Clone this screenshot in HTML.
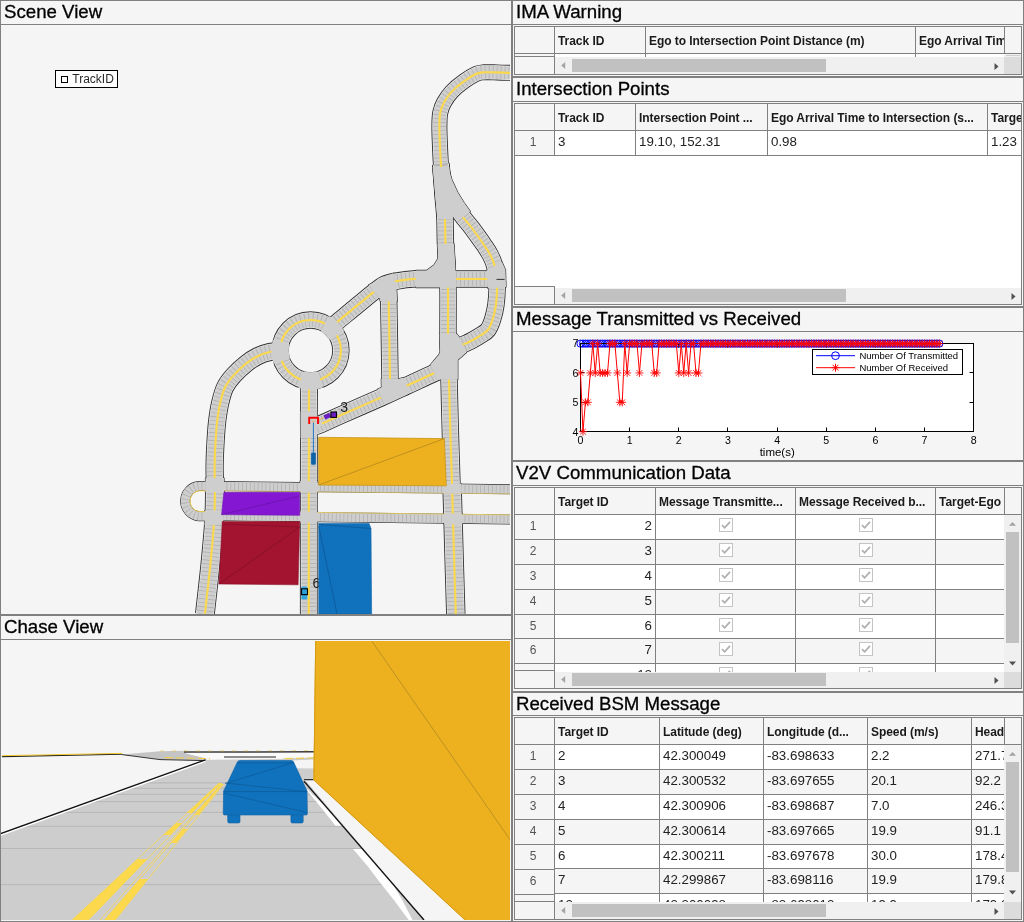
<!DOCTYPE html>
<html><head><meta charset="utf-8"><title>V2V Scene</title>
<style>
html,body{margin:0;padding:0;}
body{width:1024px;height:922px;position:relative;overflow:hidden;background:#f5f5f5;font-family:"Liberation Sans",sans-serif;color:#000;}
.abs{position:absolute;}
.ln{position:absolute;background:#808080;}
.ttl{position:absolute;-webkit-text-stroke:0.3px #000;font-size:18.67px;line-height:22px;white-space:nowrap;color:#000;}
.tbl{position:absolute;overflow:hidden;background:#fff;}
.hd{position:absolute;font-weight:bold;font-size:12px;letter-spacing:-0.05px;white-space:nowrap;overflow:hidden;color:#1a1a1a;}
.rn{position:absolute;font-size:12px;color:#555;text-align:center;white-space:nowrap;}
.tx{position:absolute;font-size:13.33px;white-space:nowrap;overflow:hidden;color:#222;}
.bg{position:absolute;}
svg{position:absolute;overflow:hidden;}
#root{position:absolute;left:0;top:0;width:1024px;height:922px;will-change:transform;}
</style></head><body><div id="root">
<div class="ln" style="left:0px;top:0px;width:1024px;height:1px;background:#808080"></div>
<div class="ln" style="left:0px;top:0px;width:1px;height:922px;background:#808080"></div>
<div class="ln" style="left:511px;top:0px;width:2px;height:922px;background:#808080"></div>
<div class="ln" style="left:1023px;top:0px;width:1px;height:922px;background:#808080"></div>
<div class="ln" style="left:0px;top:921px;width:1024px;height:1px;background:#808080"></div>
<div class="ln" style="left:0px;top:614px;width:512px;height:2px;background:#808080"></div>
<div class="ln" style="left:512px;top:76px;width:512px;height:2px;background:#808080"></div>
<div class="ln" style="left:512px;top:306px;width:512px;height:2px;background:#808080"></div>
<div class="ln" style="left:512px;top:460px;width:512px;height:2px;background:#808080"></div>
<div class="ln" style="left:512px;top:691px;width:512px;height:2px;background:#808080"></div>
<div class="ln" style="left:0px;top:24px;width:512px;height:1px;background:#808080"></div>
<div class="ln" style="left:0px;top:639px;width:512px;height:1px;background:#808080"></div>
<div class="ln" style="left:512px;top:24px;width:512px;height:1px;background:#808080"></div>
<div class="ln" style="left:512px;top:101px;width:512px;height:1px;background:#808080"></div>
<div class="ln" style="left:512px;top:331px;width:512px;height:1px;background:#808080"></div>
<div class="ln" style="left:512px;top:485px;width:512px;height:1px;background:#808080"></div>
<div class="ln" style="left:512px;top:715px;width:512px;height:1px;background:#808080"></div>
<div class="ttl" style="left:4px;top:1px">Scene View</div>
<div class="ttl" style="left:4px;top:615.5px">Chase View</div>
<div class="ttl" style="left:516px;top:1px">IMA Warning</div>
<div class="ttl" style="left:516px;top:77.5px">Intersection Points</div>
<div class="ttl" style="left:516px;top:307.5px">Message Transmitted vs Received</div>
<div class="ttl" style="left:516px;top:461.5px">V2V Communication Data</div>
<div class="ttl" style="left:516px;top:692.5px">Received BSM Message</div>
<div class="bg" style="left:514px;top:26px;width:508px;height:49px;background:#ffffff"></div>
<div class="bg" style="left:515px;top:27px;width:506px;height:26px;background:#f5f5f5"></div>
<div class="bg" style="left:555px;top:54px;width:449px;height:3px;background:#ffffff"></div>
<div class="bg" style="left:515px;top:54px;width:39px;height:2px;background:#f5f5f5"></div>
<div class="ln" style="left:645px;top:27px;width:1px;height:30px;background:#808080"></div>
<div class="ln" style="left:915px;top:27px;width:1px;height:30px;background:#808080"></div>
<div class="ln" style="left:554px;top:27px;width:1px;height:30px;background:#808080"></div>
<div class="ln" style="left:554px;top:56px;width:1px;height:18px;background:#808080"></div>
<div class="ln" style="left:515px;top:53px;width:506px;height:1px;background:#808080"></div>
<div class="ln" style="left:515px;top:56px;width:39px;height:1px;background:#808080"></div>
<div class="bg" style="left:515px;top:57px;width:39px;height:17px;background:#f5f5f5"></div>
<div class="bg" style="left:555px;top:57px;width:449px;height:17px;background:#f0f0f0"></div>
<div class="bg" style="left:572px;top:59px;width:254px;height:13px;background:#c1c1c1"></div>
<svg style="left:561px;top:61px" width="5" height="10"><path d="M4.2 0.9 L0.2 4.4 L4.2 7.9 Z" fill="#a3a3a3"/></svg>
<svg style="left:994px;top:61px" width="5" height="10"><path d="M0.5 1.9 L4.5 5.4 L0.5 8.9 Z" fill="#505050"/></svg>
<div class="ln" style="left:1004px;top:27px;width:1px;height:27px;background:#808080"></div>
<div class="bg" style="left:1004px;top:54px;width:17px;height:3px;background:#f0f0f0"></div>
<div class="bg" style="left:1004px;top:57px;width:17px;height:17px;background:#dcdcdc"></div>
<div class="ln" style="left:514px;top:26px;width:508px;height:1px;background:#808080"></div>
<div class="ln" style="left:514px;top:74px;width:508px;height:1px;background:#808080"></div>
<div class="ln" style="left:514px;top:26px;width:1px;height:49px;background:#808080"></div>
<div class="ln" style="left:1021px;top:26px;width:1px;height:49px;background:#808080"></div>
<div class="hd" style="left:558px;top:33px;width:87px;height:16px;line-height:16px">Track ID</div>
<div class="hd" style="left:649px;top:33px;width:266px;height:16px;line-height:16px">Ego to Intersection Point Distance (m)</div>
<div class="hd" style="left:919px;top:33px;width:85px;height:16px;line-height:16px">Ego Arrival Tim</div>
<div class="ln" style="left:1006px;top:55px;width:14px;height:1px;background:#cfcfcf"></div>
<div class="bg" style="left:514px;top:103px;width:508px;height:202px;background:#ffffff"></div>
<div class="bg" style="left:515px;top:104px;width:506px;height:26px;background:#f5f5f5"></div>
<div class="bg" style="left:555px;top:131px;width:466px;height:24px;background:#ffffff"></div>
<div class="bg" style="left:515px;top:131px;width:39px;height:25px;background:#f5f5f5"></div>
<div class="ln" style="left:555px;top:155px;width:466px;height:1px;background:#808080"></div>
<div class="ln" style="left:515px;top:155px;width:40px;height:1px;background:#808080"></div>
<div class="ln" style="left:635px;top:104px;width:1px;height:52px;background:#808080"></div>
<div class="ln" style="left:767px;top:104px;width:1px;height:52px;background:#808080"></div>
<div class="ln" style="left:987px;top:104px;width:1px;height:52px;background:#808080"></div>
<div class="ln" style="left:554px;top:104px;width:1px;height:52px;background:#808080"></div>
<div class="ln" style="left:554px;top:286px;width:1px;height:18px;background:#808080"></div>
<div class="ln" style="left:515px;top:130px;width:506px;height:1px;background:#808080"></div>
<div class="ln" style="left:515px;top:286px;width:39px;height:1px;background:#808080"></div>
<div class="bg" style="left:515px;top:287px;width:39px;height:17px;background:#f5f5f5"></div>
<div class="bg" style="left:555px;top:288px;width:466px;height:16px;background:#f0f0f0"></div>
<div class="bg" style="left:572px;top:289px;width:274px;height:13px;background:#c1c1c1"></div>
<svg style="left:561px;top:291px" width="5" height="10"><path d="M4.2 0.9 L0.2 4.4 L4.2 7.9 Z" fill="#a3a3a3"/></svg>
<svg style="left:1011px;top:291px" width="5" height="10"><path d="M0.5 1.9 L4.5 5.4 L0.5 8.9 Z" fill="#505050"/></svg>
<div class="ln" style="left:514px;top:103px;width:508px;height:1px;background:#808080"></div>
<div class="ln" style="left:514px;top:304px;width:508px;height:1px;background:#808080"></div>
<div class="ln" style="left:514px;top:103px;width:1px;height:202px;background:#808080"></div>
<div class="ln" style="left:1021px;top:103px;width:1px;height:202px;background:#808080"></div>
<div class="hd" style="left:558px;top:110px;width:77px;height:16px;line-height:16px">Track ID</div>
<div class="hd" style="left:639px;top:110px;width:128px;height:16px;line-height:16px">Intersection Point ...</div>
<div class="hd" style="left:771px;top:110px;width:216px;height:16px;line-height:16px">Ego Arrival Time to Intersection (s...</div>
<div class="hd" style="left:991px;top:110px;width:30px;height:16px;line-height:16px">Targe</div>
<div class="rn" style="left:515px;top:134px;width:36px;line-height:16px">1</div>
<div class="tx" style="left:555px;top:131px;width:77px;padding-left:3px;text-align:left;line-height:22px;height:24px;overflow:hidden;">3</div>
<div class="tx" style="left:636px;top:131px;width:128px;padding-left:3px;text-align:left;line-height:22px;height:24px;overflow:hidden;">19.10, 152.31</div>
<div class="tx" style="left:768px;top:131px;width:216px;padding-left:3px;text-align:left;line-height:22px;height:24px;overflow:hidden;">0.98</div>
<div class="tx" style="left:988px;top:131px;width:30px;padding-left:3px;text-align:left;line-height:22px;height:24px;overflow:hidden;">1.23</div>
<div class="bg" style="left:514px;top:487px;width:508px;height:202px;background:#ffffff"></div>
<div class="bg" style="left:515px;top:488px;width:506px;height:26px;background:#f5f5f5"></div>
<div class="bg" style="left:555px;top:515px;width:449px;height:24px;background:#ffffff"></div>
<div class="bg" style="left:555px;top:540px;width:449px;height:24px;background:#f5f5f5"></div>
<div class="bg" style="left:555px;top:565px;width:449px;height:24px;background:#ffffff"></div>
<div class="bg" style="left:555px;top:590px;width:449px;height:24px;background:#f5f5f5"></div>
<div class="bg" style="left:555px;top:615px;width:449px;height:23px;background:#ffffff"></div>
<div class="bg" style="left:555px;top:639px;width:449px;height:24px;background:#f5f5f5"></div>
<div class="bg" style="left:555px;top:664px;width:449px;height:8px;background:#ffffff"></div>
<div class="bg" style="left:515px;top:515px;width:39px;height:156px;background:#f5f5f5"></div>
<div class="ln" style="left:555px;top:539px;width:449px;height:1px;background:#808080"></div>
<div class="ln" style="left:515px;top:539px;width:40px;height:1px;background:#808080"></div>
<div class="ln" style="left:555px;top:564px;width:449px;height:1px;background:#808080"></div>
<div class="ln" style="left:515px;top:564px;width:40px;height:1px;background:#808080"></div>
<div class="ln" style="left:555px;top:589px;width:449px;height:1px;background:#808080"></div>
<div class="ln" style="left:515px;top:589px;width:40px;height:1px;background:#808080"></div>
<div class="ln" style="left:555px;top:614px;width:449px;height:1px;background:#808080"></div>
<div class="ln" style="left:515px;top:614px;width:40px;height:1px;background:#808080"></div>
<div class="ln" style="left:555px;top:638px;width:449px;height:1px;background:#808080"></div>
<div class="ln" style="left:515px;top:638px;width:40px;height:1px;background:#808080"></div>
<div class="ln" style="left:555px;top:663px;width:449px;height:1px;background:#808080"></div>
<div class="ln" style="left:515px;top:663px;width:40px;height:1px;background:#808080"></div>
<div class="ln" style="left:655px;top:488px;width:1px;height:184px;background:#808080"></div>
<div class="ln" style="left:795px;top:488px;width:1px;height:184px;background:#808080"></div>
<div class="ln" style="left:935px;top:488px;width:1px;height:184px;background:#808080"></div>
<div class="ln" style="left:554px;top:488px;width:1px;height:184px;background:#808080"></div>
<div class="ln" style="left:554px;top:670px;width:1px;height:18px;background:#808080"></div>
<div class="ln" style="left:515px;top:514px;width:506px;height:1px;background:#808080"></div>
<div class="ln" style="left:515px;top:670px;width:39px;height:1px;background:#808080"></div>
<div class="bg" style="left:515px;top:671px;width:39px;height:17px;background:#f5f5f5"></div>
<div class="bg" style="left:555px;top:672px;width:449px;height:16px;background:#f0f0f0"></div>
<div class="bg" style="left:572px;top:673px;width:254px;height:13px;background:#c1c1c1"></div>
<svg style="left:561px;top:675px" width="5" height="10"><path d="M4.2 0.9 L0.2 4.4 L4.2 7.9 Z" fill="#a3a3a3"/></svg>
<svg style="left:994px;top:675px" width="5" height="10"><path d="M0.5 1.9 L4.5 5.4 L0.5 8.9 Z" fill="#505050"/></svg>
<div class="ln" style="left:1004px;top:488px;width:1px;height:27px;background:#808080"></div>
<div class="bg" style="left:1004px;top:515px;width:17px;height:157px;background:#f0f0f0"></div>
<div class="bg" style="left:1004px;top:672px;width:17px;height:16px;background:#dcdcdc"></div>
<div class="bg" style="left:1006px;top:532px;width:13px;height:111px;background:#c1c1c1"></div>
<svg style="left:1008px;top:521px" width="9" height="5"><path d="M1 4.8 L4.5 1 L8 4.8 Z" fill="#a3a3a3"/></svg>
<svg style="left:1008px;top:661px" width="9" height="5"><path d="M1 0.6 L4.5 4.4 L8 0.6 Z" fill="#505050"/></svg>
<div class="ln" style="left:514px;top:487px;width:508px;height:1px;background:#808080"></div>
<div class="ln" style="left:514px;top:688px;width:508px;height:1px;background:#808080"></div>
<div class="ln" style="left:514px;top:487px;width:1px;height:202px;background:#808080"></div>
<div class="ln" style="left:1021px;top:487px;width:1px;height:202px;background:#808080"></div>
<div class="hd" style="left:558px;top:494px;width:97px;height:16px;line-height:16px">Target ID</div>
<div class="hd" style="left:659px;top:494px;width:136px;height:16px;line-height:16px">Message Transmitte...</div>
<div class="hd" style="left:799px;top:494px;width:136px;height:16px;line-height:16px">Message Received b...</div>
<div class="hd" style="left:939px;top:494px;width:65px;height:16px;line-height:16px">Target-Ego</div>
<div class="rn" style="left:515px;top:518px;width:36px;line-height:16px">1</div>
<div class="tx" style="left:555px;top:515px;width:97px;padding-right:3px;text-align:right;line-height:22px;height:24px;overflow:hidden;">2</div>
<div class="abs" style="left:656px;top:515px;width:139px;height:24px;overflow:hidden;"><svg style="left:63px;top:3px" width="14" height="14" viewBox="0 0 14 14"><rect x="0.5" y="0.5" width="13" height="13" fill="#fff" stroke="#c4c4c4"/><path d="M3 7.2 L5.6 9.8 L11 3.8" fill="none" stroke="#b0b0b0" stroke-width="1.8"/></svg></div>
<div class="abs" style="left:796px;top:515px;width:139px;height:24px;overflow:hidden;"><svg style="left:63px;top:3px" width="14" height="14" viewBox="0 0 14 14"><rect x="0.5" y="0.5" width="13" height="13" fill="#fff" stroke="#c4c4c4"/><path d="M3 7.2 L5.6 9.8 L11 3.8" fill="none" stroke="#b0b0b0" stroke-width="1.8"/></svg></div>
<div class="rn" style="left:515px;top:543px;width:36px;line-height:16px">2</div>
<div class="tx" style="left:555px;top:540px;width:97px;padding-right:3px;text-align:right;line-height:22px;height:24px;overflow:hidden;">3</div>
<div class="abs" style="left:656px;top:540px;width:139px;height:24px;overflow:hidden;"><svg style="left:63px;top:3px" width="14" height="14" viewBox="0 0 14 14"><rect x="0.5" y="0.5" width="13" height="13" fill="#fff" stroke="#c4c4c4"/><path d="M3 7.2 L5.6 9.8 L11 3.8" fill="none" stroke="#b0b0b0" stroke-width="1.8"/></svg></div>
<div class="abs" style="left:796px;top:540px;width:139px;height:24px;overflow:hidden;"><svg style="left:63px;top:3px" width="14" height="14" viewBox="0 0 14 14"><rect x="0.5" y="0.5" width="13" height="13" fill="#fff" stroke="#c4c4c4"/><path d="M3 7.2 L5.6 9.8 L11 3.8" fill="none" stroke="#b0b0b0" stroke-width="1.8"/></svg></div>
<div class="rn" style="left:515px;top:568px;width:36px;line-height:16px">3</div>
<div class="tx" style="left:555px;top:565px;width:97px;padding-right:3px;text-align:right;line-height:22px;height:24px;overflow:hidden;">4</div>
<div class="abs" style="left:656px;top:565px;width:139px;height:24px;overflow:hidden;"><svg style="left:63px;top:3px" width="14" height="14" viewBox="0 0 14 14"><rect x="0.5" y="0.5" width="13" height="13" fill="#fff" stroke="#c4c4c4"/><path d="M3 7.2 L5.6 9.8 L11 3.8" fill="none" stroke="#b0b0b0" stroke-width="1.8"/></svg></div>
<div class="abs" style="left:796px;top:565px;width:139px;height:24px;overflow:hidden;"><svg style="left:63px;top:3px" width="14" height="14" viewBox="0 0 14 14"><rect x="0.5" y="0.5" width="13" height="13" fill="#fff" stroke="#c4c4c4"/><path d="M3 7.2 L5.6 9.8 L11 3.8" fill="none" stroke="#b0b0b0" stroke-width="1.8"/></svg></div>
<div class="rn" style="left:515px;top:593px;width:36px;line-height:16px">4</div>
<div class="tx" style="left:555px;top:590px;width:97px;padding-right:3px;text-align:right;line-height:22px;height:24px;overflow:hidden;">5</div>
<div class="abs" style="left:656px;top:590px;width:139px;height:24px;overflow:hidden;"><svg style="left:63px;top:3px" width="14" height="14" viewBox="0 0 14 14"><rect x="0.5" y="0.5" width="13" height="13" fill="#fff" stroke="#c4c4c4"/><path d="M3 7.2 L5.6 9.8 L11 3.8" fill="none" stroke="#b0b0b0" stroke-width="1.8"/></svg></div>
<div class="abs" style="left:796px;top:590px;width:139px;height:24px;overflow:hidden;"><svg style="left:63px;top:3px" width="14" height="14" viewBox="0 0 14 14"><rect x="0.5" y="0.5" width="13" height="13" fill="#fff" stroke="#c4c4c4"/><path d="M3 7.2 L5.6 9.8 L11 3.8" fill="none" stroke="#b0b0b0" stroke-width="1.8"/></svg></div>
<div class="rn" style="left:515px;top:618px;width:36px;line-height:16px">5</div>
<div class="tx" style="left:555px;top:615px;width:97px;padding-right:3px;text-align:right;line-height:22px;height:24px;overflow:hidden;">6</div>
<div class="abs" style="left:656px;top:615px;width:139px;height:24px;overflow:hidden;"><svg style="left:63px;top:3px" width="14" height="14" viewBox="0 0 14 14"><rect x="0.5" y="0.5" width="13" height="13" fill="#fff" stroke="#c4c4c4"/><path d="M3 7.2 L5.6 9.8 L11 3.8" fill="none" stroke="#b0b0b0" stroke-width="1.8"/></svg></div>
<div class="abs" style="left:796px;top:615px;width:139px;height:24px;overflow:hidden;"><svg style="left:63px;top:3px" width="14" height="14" viewBox="0 0 14 14"><rect x="0.5" y="0.5" width="13" height="13" fill="#fff" stroke="#c4c4c4"/><path d="M3 7.2 L5.6 9.8 L11 3.8" fill="none" stroke="#b0b0b0" stroke-width="1.8"/></svg></div>
<div class="rn" style="left:515px;top:642px;width:36px;line-height:16px">6</div>
<div class="tx" style="left:555px;top:639px;width:97px;padding-right:3px;text-align:right;line-height:22px;height:24px;overflow:hidden;">7</div>
<div class="abs" style="left:656px;top:639px;width:139px;height:24px;overflow:hidden;"><svg style="left:63px;top:3px" width="14" height="14" viewBox="0 0 14 14"><rect x="0.5" y="0.5" width="13" height="13" fill="#fff" stroke="#c4c4c4"/><path d="M3 7.2 L5.6 9.8 L11 3.8" fill="none" stroke="#b0b0b0" stroke-width="1.8"/></svg></div>
<div class="abs" style="left:796px;top:639px;width:139px;height:24px;overflow:hidden;"><svg style="left:63px;top:3px" width="14" height="14" viewBox="0 0 14 14"><rect x="0.5" y="0.5" width="13" height="13" fill="#fff" stroke="#c4c4c4"/><path d="M3 7.2 L5.6 9.8 L11 3.8" fill="none" stroke="#b0b0b0" stroke-width="1.8"/></svg></div>
<div class="tx" style="left:555px;top:664px;width:97px;padding-right:3px;text-align:right;line-height:22px;height:8px;overflow:hidden;">12</div>
<div class="abs" style="left:656px;top:664px;width:139px;height:8px;overflow:hidden;"><svg style="left:63px;top:3px" width="14" height="14" viewBox="0 0 14 14"><rect x="0.5" y="0.5" width="13" height="13" fill="#fff" stroke="#c4c4c4"/><path d="M3 7.2 L5.6 9.8 L11 3.8" fill="none" stroke="#b0b0b0" stroke-width="1.8"/></svg></div>
<div class="abs" style="left:796px;top:664px;width:139px;height:8px;overflow:hidden;"><svg style="left:63px;top:3px" width="14" height="14" viewBox="0 0 14 14"><rect x="0.5" y="0.5" width="13" height="13" fill="#fff" stroke="#c4c4c4"/><path d="M3 7.2 L5.6 9.8 L11 3.8" fill="none" stroke="#b0b0b0" stroke-width="1.8"/></svg></div>
<div class="bg" style="left:514px;top:717px;width:508px;height:203px;background:#ffffff"></div>
<div class="bg" style="left:515px;top:718px;width:506px;height:26px;background:#f5f5f5"></div>
<div class="bg" style="left:555px;top:745px;width:449px;height:24px;background:#ffffff"></div>
<div class="bg" style="left:555px;top:770px;width:449px;height:24px;background:#f5f5f5"></div>
<div class="bg" style="left:555px;top:795px;width:449px;height:24px;background:#ffffff"></div>
<div class="bg" style="left:555px;top:820px;width:449px;height:24px;background:#f5f5f5"></div>
<div class="bg" style="left:555px;top:845px;width:449px;height:23px;background:#ffffff"></div>
<div class="bg" style="left:555px;top:869px;width:449px;height:24px;background:#f5f5f5"></div>
<div class="bg" style="left:555px;top:894px;width:449px;height:8px;background:#ffffff"></div>
<div class="bg" style="left:515px;top:745px;width:39px;height:156px;background:#f5f5f5"></div>
<div class="ln" style="left:555px;top:769px;width:449px;height:1px;background:#808080"></div>
<div class="ln" style="left:515px;top:769px;width:40px;height:1px;background:#808080"></div>
<div class="ln" style="left:555px;top:794px;width:449px;height:1px;background:#808080"></div>
<div class="ln" style="left:515px;top:794px;width:40px;height:1px;background:#808080"></div>
<div class="ln" style="left:555px;top:819px;width:449px;height:1px;background:#808080"></div>
<div class="ln" style="left:515px;top:819px;width:40px;height:1px;background:#808080"></div>
<div class="ln" style="left:555px;top:844px;width:449px;height:1px;background:#808080"></div>
<div class="ln" style="left:515px;top:844px;width:40px;height:1px;background:#808080"></div>
<div class="ln" style="left:555px;top:868px;width:449px;height:1px;background:#808080"></div>
<div class="ln" style="left:515px;top:869px;width:40px;height:1px;background:#808080"></div>
<div class="ln" style="left:555px;top:893px;width:449px;height:1px;background:#808080"></div>
<div class="ln" style="left:515px;top:894px;width:40px;height:1px;background:#808080"></div>
<div class="ln" style="left:659px;top:718px;width:1px;height:184px;background:#808080"></div>
<div class="ln" style="left:763px;top:718px;width:1px;height:184px;background:#808080"></div>
<div class="ln" style="left:867px;top:718px;width:1px;height:184px;background:#808080"></div>
<div class="ln" style="left:971px;top:718px;width:1px;height:184px;background:#808080"></div>
<div class="ln" style="left:554px;top:718px;width:1px;height:184px;background:#808080"></div>
<div class="ln" style="left:554px;top:901px;width:1px;height:18px;background:#808080"></div>
<div class="ln" style="left:515px;top:744px;width:506px;height:1px;background:#808080"></div>
<div class="ln" style="left:515px;top:901px;width:39px;height:1px;background:#808080"></div>
<div class="bg" style="left:515px;top:902px;width:39px;height:17px;background:#f5f5f5"></div>
<div class="bg" style="left:555px;top:902px;width:449px;height:17px;background:#f0f0f0"></div>
<div class="bg" style="left:572px;top:904px;width:254px;height:13px;background:#c1c1c1"></div>
<svg style="left:561px;top:906px" width="5" height="10"><path d="M4.2 0.9 L0.2 4.4 L4.2 7.9 Z" fill="#a3a3a3"/></svg>
<svg style="left:994px;top:906px" width="5" height="10"><path d="M0.5 1.9 L4.5 5.4 L0.5 8.9 Z" fill="#505050"/></svg>
<div class="ln" style="left:1004px;top:718px;width:1px;height:27px;background:#808080"></div>
<div class="bg" style="left:1004px;top:745px;width:17px;height:157px;background:#f0f0f0"></div>
<div class="bg" style="left:1004px;top:902px;width:17px;height:17px;background:#dcdcdc"></div>
<div class="bg" style="left:1006px;top:762px;width:13px;height:110px;background:#c1c1c1"></div>
<svg style="left:1008px;top:751px" width="9" height="5"><path d="M1 4.8 L4.5 1 L8 4.8 Z" fill="#a3a3a3"/></svg>
<svg style="left:1008px;top:890px" width="9" height="5"><path d="M1 0.6 L4.5 4.4 L8 0.6 Z" fill="#505050"/></svg>
<div class="ln" style="left:514px;top:717px;width:508px;height:1px;background:#808080"></div>
<div class="ln" style="left:514px;top:919px;width:508px;height:1px;background:#808080"></div>
<div class="ln" style="left:514px;top:717px;width:1px;height:203px;background:#808080"></div>
<div class="ln" style="left:1021px;top:717px;width:1px;height:203px;background:#808080"></div>
<div class="hd" style="left:558px;top:724px;width:101px;height:16px;line-height:16px">Target ID</div>
<div class="hd" style="left:663px;top:724px;width:100px;height:16px;line-height:16px">Latitude (deg)</div>
<div class="hd" style="left:767px;top:724px;width:100px;height:16px;line-height:16px">Longitude (d...</div>
<div class="hd" style="left:871px;top:724px;width:100px;height:16px;line-height:16px">Speed (m/s)</div>
<div class="hd" style="left:975px;top:724px;width:29px;height:16px;line-height:16px">Head</div>
<div class="rn" style="left:515px;top:748px;width:36px;line-height:16px">1</div>
<div class="tx" style="left:555px;top:745px;width:101px;padding-left:3px;text-align:left;line-height:22px;height:24px;overflow:hidden;">2</div>
<div class="tx" style="left:660px;top:745px;width:100px;padding-left:3px;text-align:left;line-height:22px;height:24px;overflow:hidden;">42.300049</div>
<div class="tx" style="left:764px;top:745px;width:100px;padding-left:3px;text-align:left;line-height:22px;height:24px;overflow:hidden;">-83.698633</div>
<div class="tx" style="left:868px;top:745px;width:100px;padding-left:3px;text-align:left;line-height:22px;height:24px;overflow:hidden;">2.2</div>
<div class="tx" style="left:972px;top:745px;width:29px;padding-left:3px;text-align:left;line-height:22px;height:24px;overflow:hidden;">271.7</div>
<div class="rn" style="left:515px;top:773px;width:36px;line-height:16px">2</div>
<div class="tx" style="left:555px;top:770px;width:101px;padding-left:3px;text-align:left;line-height:22px;height:24px;overflow:hidden;">3</div>
<div class="tx" style="left:660px;top:770px;width:100px;padding-left:3px;text-align:left;line-height:22px;height:24px;overflow:hidden;">42.300532</div>
<div class="tx" style="left:764px;top:770px;width:100px;padding-left:3px;text-align:left;line-height:22px;height:24px;overflow:hidden;">-83.697655</div>
<div class="tx" style="left:868px;top:770px;width:100px;padding-left:3px;text-align:left;line-height:22px;height:24px;overflow:hidden;">20.1</div>
<div class="tx" style="left:972px;top:770px;width:29px;padding-left:3px;text-align:left;line-height:22px;height:24px;overflow:hidden;">92.2</div>
<div class="rn" style="left:515px;top:798px;width:36px;line-height:16px">3</div>
<div class="tx" style="left:555px;top:795px;width:101px;padding-left:3px;text-align:left;line-height:22px;height:24px;overflow:hidden;">4</div>
<div class="tx" style="left:660px;top:795px;width:100px;padding-left:3px;text-align:left;line-height:22px;height:24px;overflow:hidden;">42.300906</div>
<div class="tx" style="left:764px;top:795px;width:100px;padding-left:3px;text-align:left;line-height:22px;height:24px;overflow:hidden;">-83.698687</div>
<div class="tx" style="left:868px;top:795px;width:100px;padding-left:3px;text-align:left;line-height:22px;height:24px;overflow:hidden;">7.0</div>
<div class="tx" style="left:972px;top:795px;width:29px;padding-left:3px;text-align:left;line-height:22px;height:24px;overflow:hidden;">246.3</div>
<div class="rn" style="left:515px;top:823px;width:36px;line-height:16px">4</div>
<div class="tx" style="left:555px;top:820px;width:101px;padding-left:3px;text-align:left;line-height:22px;height:24px;overflow:hidden;">5</div>
<div class="tx" style="left:660px;top:820px;width:100px;padding-left:3px;text-align:left;line-height:22px;height:24px;overflow:hidden;">42.300614</div>
<div class="tx" style="left:764px;top:820px;width:100px;padding-left:3px;text-align:left;line-height:22px;height:24px;overflow:hidden;">-83.697665</div>
<div class="tx" style="left:868px;top:820px;width:100px;padding-left:3px;text-align:left;line-height:22px;height:24px;overflow:hidden;">19.9</div>
<div class="tx" style="left:972px;top:820px;width:29px;padding-left:3px;text-align:left;line-height:22px;height:24px;overflow:hidden;">91.1</div>
<div class="rn" style="left:515px;top:848px;width:36px;line-height:16px">5</div>
<div class="tx" style="left:555px;top:845px;width:101px;padding-left:3px;text-align:left;line-height:22px;height:24px;overflow:hidden;">6</div>
<div class="tx" style="left:660px;top:845px;width:100px;padding-left:3px;text-align:left;line-height:22px;height:24px;overflow:hidden;">42.300211</div>
<div class="tx" style="left:764px;top:845px;width:100px;padding-left:3px;text-align:left;line-height:22px;height:24px;overflow:hidden;">-83.697678</div>
<div class="tx" style="left:868px;top:845px;width:100px;padding-left:3px;text-align:left;line-height:22px;height:24px;overflow:hidden;">30.0</div>
<div class="tx" style="left:972px;top:845px;width:29px;padding-left:3px;text-align:left;line-height:22px;height:24px;overflow:hidden;">178.4</div>
<div class="rn" style="left:515px;top:873px;width:36px;line-height:16px">6</div>
<div class="tx" style="left:555px;top:869px;width:101px;padding-left:3px;text-align:left;line-height:22px;height:24px;overflow:hidden;">7</div>
<div class="tx" style="left:660px;top:869px;width:100px;padding-left:3px;text-align:left;line-height:22px;height:24px;overflow:hidden;">42.299867</div>
<div class="tx" style="left:764px;top:869px;width:100px;padding-left:3px;text-align:left;line-height:22px;height:24px;overflow:hidden;">-83.698116</div>
<div class="tx" style="left:868px;top:869px;width:100px;padding-left:3px;text-align:left;line-height:22px;height:24px;overflow:hidden;">19.9</div>
<div class="tx" style="left:972px;top:869px;width:29px;padding-left:3px;text-align:left;line-height:22px;height:24px;overflow:hidden;">179.8</div>
<div class="tx" style="left:555px;top:894px;width:101px;padding-left:3px;text-align:left;line-height:22px;height:8px;overflow:hidden;">12</div>
<div class="tx" style="left:660px;top:894px;width:100px;padding-left:3px;text-align:left;line-height:22px;height:8px;overflow:hidden;">42.300098</div>
<div class="tx" style="left:764px;top:894px;width:100px;padding-left:3px;text-align:left;line-height:22px;height:8px;overflow:hidden;">-83.698012</div>
<div class="tx" style="left:868px;top:894px;width:100px;padding-left:3px;text-align:left;line-height:22px;height:8px;overflow:hidden;">19.9</div>
<div class="tx" style="left:972px;top:894px;width:29px;padding-left:3px;text-align:left;line-height:22px;height:8px;overflow:hidden;">179.8</div><svg style="left:513px;top:332px" width="508" height="128" viewBox="513 332 508 128" font-family="Liberation Sans, sans-serif">
<rect x="580.5" y="343.5" width="393.0" height="88.0" fill="#fff"/>
<path d="M580.50 343.60H939.29" stroke="#0000ff" stroke-width="1" fill="none"/>
<path d="M576.90 343.60a3.6 3.6 0 1 0 7.2 0a3.6 3.6 0 1 0 -7.2 0M579.36 343.60a3.6 3.6 0 1 0 7.2 0a3.6 3.6 0 1 0 -7.2 0M581.81 343.60a3.6 3.6 0 1 0 7.2 0a3.6 3.6 0 1 0 -7.2 0M584.27 343.60a3.6 3.6 0 1 0 7.2 0a3.6 3.6 0 1 0 -7.2 0M586.73 343.60a3.6 3.6 0 1 0 7.2 0a3.6 3.6 0 1 0 -7.2 0M589.19 343.60a3.6 3.6 0 1 0 7.2 0a3.6 3.6 0 1 0 -7.2 0M591.64 343.60a3.6 3.6 0 1 0 7.2 0a3.6 3.6 0 1 0 -7.2 0M594.10 343.60a3.6 3.6 0 1 0 7.2 0a3.6 3.6 0 1 0 -7.2 0M596.56 343.60a3.6 3.6 0 1 0 7.2 0a3.6 3.6 0 1 0 -7.2 0M599.02 343.60a3.6 3.6 0 1 0 7.2 0a3.6 3.6 0 1 0 -7.2 0M601.48 343.60a3.6 3.6 0 1 0 7.2 0a3.6 3.6 0 1 0 -7.2 0M603.93 343.60a3.6 3.6 0 1 0 7.2 0a3.6 3.6 0 1 0 -7.2 0M606.39 343.60a3.6 3.6 0 1 0 7.2 0a3.6 3.6 0 1 0 -7.2 0M608.85 343.60a3.6 3.6 0 1 0 7.2 0a3.6 3.6 0 1 0 -7.2 0M611.30 343.60a3.6 3.6 0 1 0 7.2 0a3.6 3.6 0 1 0 -7.2 0M613.76 343.60a3.6 3.6 0 1 0 7.2 0a3.6 3.6 0 1 0 -7.2 0M616.22 343.60a3.6 3.6 0 1 0 7.2 0a3.6 3.6 0 1 0 -7.2 0M618.68 343.60a3.6 3.6 0 1 0 7.2 0a3.6 3.6 0 1 0 -7.2 0M621.13 343.60a3.6 3.6 0 1 0 7.2 0a3.6 3.6 0 1 0 -7.2 0M623.59 343.60a3.6 3.6 0 1 0 7.2 0a3.6 3.6 0 1 0 -7.2 0M626.05 343.60a3.6 3.6 0 1 0 7.2 0a3.6 3.6 0 1 0 -7.2 0M628.51 343.60a3.6 3.6 0 1 0 7.2 0a3.6 3.6 0 1 0 -7.2 0M630.97 343.60a3.6 3.6 0 1 0 7.2 0a3.6 3.6 0 1 0 -7.2 0M633.42 343.60a3.6 3.6 0 1 0 7.2 0a3.6 3.6 0 1 0 -7.2 0M635.88 343.60a3.6 3.6 0 1 0 7.2 0a3.6 3.6 0 1 0 -7.2 0M638.34 343.60a3.6 3.6 0 1 0 7.2 0a3.6 3.6 0 1 0 -7.2 0M640.79 343.60a3.6 3.6 0 1 0 7.2 0a3.6 3.6 0 1 0 -7.2 0M643.25 343.60a3.6 3.6 0 1 0 7.2 0a3.6 3.6 0 1 0 -7.2 0M645.71 343.60a3.6 3.6 0 1 0 7.2 0a3.6 3.6 0 1 0 -7.2 0M648.17 343.60a3.6 3.6 0 1 0 7.2 0a3.6 3.6 0 1 0 -7.2 0M650.62 343.60a3.6 3.6 0 1 0 7.2 0a3.6 3.6 0 1 0 -7.2 0M653.08 343.60a3.6 3.6 0 1 0 7.2 0a3.6 3.6 0 1 0 -7.2 0M655.54 343.60a3.6 3.6 0 1 0 7.2 0a3.6 3.6 0 1 0 -7.2 0M658.00 343.60a3.6 3.6 0 1 0 7.2 0a3.6 3.6 0 1 0 -7.2 0M660.46 343.60a3.6 3.6 0 1 0 7.2 0a3.6 3.6 0 1 0 -7.2 0M662.91 343.60a3.6 3.6 0 1 0 7.2 0a3.6 3.6 0 1 0 -7.2 0M665.37 343.60a3.6 3.6 0 1 0 7.2 0a3.6 3.6 0 1 0 -7.2 0M667.83 343.60a3.6 3.6 0 1 0 7.2 0a3.6 3.6 0 1 0 -7.2 0M670.28 343.60a3.6 3.6 0 1 0 7.2 0a3.6 3.6 0 1 0 -7.2 0M672.74 343.60a3.6 3.6 0 1 0 7.2 0a3.6 3.6 0 1 0 -7.2 0M675.20 343.60a3.6 3.6 0 1 0 7.2 0a3.6 3.6 0 1 0 -7.2 0M677.66 343.60a3.6 3.6 0 1 0 7.2 0a3.6 3.6 0 1 0 -7.2 0M680.12 343.60a3.6 3.6 0 1 0 7.2 0a3.6 3.6 0 1 0 -7.2 0M682.57 343.60a3.6 3.6 0 1 0 7.2 0a3.6 3.6 0 1 0 -7.2 0M685.03 343.60a3.6 3.6 0 1 0 7.2 0a3.6 3.6 0 1 0 -7.2 0M687.49 343.60a3.6 3.6 0 1 0 7.2 0a3.6 3.6 0 1 0 -7.2 0M689.95 343.60a3.6 3.6 0 1 0 7.2 0a3.6 3.6 0 1 0 -7.2 0M692.40 343.60a3.6 3.6 0 1 0 7.2 0a3.6 3.6 0 1 0 -7.2 0M694.86 343.60a3.6 3.6 0 1 0 7.2 0a3.6 3.6 0 1 0 -7.2 0M697.32 343.60a3.6 3.6 0 1 0 7.2 0a3.6 3.6 0 1 0 -7.2 0M699.77 343.60a3.6 3.6 0 1 0 7.2 0a3.6 3.6 0 1 0 -7.2 0M702.23 343.60a3.6 3.6 0 1 0 7.2 0a3.6 3.6 0 1 0 -7.2 0M704.69 343.60a3.6 3.6 0 1 0 7.2 0a3.6 3.6 0 1 0 -7.2 0M707.15 343.60a3.6 3.6 0 1 0 7.2 0a3.6 3.6 0 1 0 -7.2 0M709.61 343.60a3.6 3.6 0 1 0 7.2 0a3.6 3.6 0 1 0 -7.2 0M712.06 343.60a3.6 3.6 0 1 0 7.2 0a3.6 3.6 0 1 0 -7.2 0M714.52 343.60a3.6 3.6 0 1 0 7.2 0a3.6 3.6 0 1 0 -7.2 0M716.98 343.60a3.6 3.6 0 1 0 7.2 0a3.6 3.6 0 1 0 -7.2 0M719.44 343.60a3.6 3.6 0 1 0 7.2 0a3.6 3.6 0 1 0 -7.2 0M721.89 343.60a3.6 3.6 0 1 0 7.2 0a3.6 3.6 0 1 0 -7.2 0M724.35 343.60a3.6 3.6 0 1 0 7.2 0a3.6 3.6 0 1 0 -7.2 0M726.81 343.60a3.6 3.6 0 1 0 7.2 0a3.6 3.6 0 1 0 -7.2 0M729.26 343.60a3.6 3.6 0 1 0 7.2 0a3.6 3.6 0 1 0 -7.2 0M731.72 343.60a3.6 3.6 0 1 0 7.2 0a3.6 3.6 0 1 0 -7.2 0M734.18 343.60a3.6 3.6 0 1 0 7.2 0a3.6 3.6 0 1 0 -7.2 0M736.64 343.60a3.6 3.6 0 1 0 7.2 0a3.6 3.6 0 1 0 -7.2 0M739.10 343.60a3.6 3.6 0 1 0 7.2 0a3.6 3.6 0 1 0 -7.2 0M741.55 343.60a3.6 3.6 0 1 0 7.2 0a3.6 3.6 0 1 0 -7.2 0M744.01 343.60a3.6 3.6 0 1 0 7.2 0a3.6 3.6 0 1 0 -7.2 0M746.47 343.60a3.6 3.6 0 1 0 7.2 0a3.6 3.6 0 1 0 -7.2 0M748.92 343.60a3.6 3.6 0 1 0 7.2 0a3.6 3.6 0 1 0 -7.2 0M751.38 343.60a3.6 3.6 0 1 0 7.2 0a3.6 3.6 0 1 0 -7.2 0M753.84 343.60a3.6 3.6 0 1 0 7.2 0a3.6 3.6 0 1 0 -7.2 0M756.30 343.60a3.6 3.6 0 1 0 7.2 0a3.6 3.6 0 1 0 -7.2 0M758.75 343.60a3.6 3.6 0 1 0 7.2 0a3.6 3.6 0 1 0 -7.2 0M761.21 343.60a3.6 3.6 0 1 0 7.2 0a3.6 3.6 0 1 0 -7.2 0M763.67 343.60a3.6 3.6 0 1 0 7.2 0a3.6 3.6 0 1 0 -7.2 0M766.13 343.60a3.6 3.6 0 1 0 7.2 0a3.6 3.6 0 1 0 -7.2 0M768.58 343.60a3.6 3.6 0 1 0 7.2 0a3.6 3.6 0 1 0 -7.2 0M771.04 343.60a3.6 3.6 0 1 0 7.2 0a3.6 3.6 0 1 0 -7.2 0M773.50 343.60a3.6 3.6 0 1 0 7.2 0a3.6 3.6 0 1 0 -7.2 0M775.96 343.60a3.6 3.6 0 1 0 7.2 0a3.6 3.6 0 1 0 -7.2 0M778.41 343.60a3.6 3.6 0 1 0 7.2 0a3.6 3.6 0 1 0 -7.2 0M780.87 343.60a3.6 3.6 0 1 0 7.2 0a3.6 3.6 0 1 0 -7.2 0M783.33 343.60a3.6 3.6 0 1 0 7.2 0a3.6 3.6 0 1 0 -7.2 0M785.79 343.60a3.6 3.6 0 1 0 7.2 0a3.6 3.6 0 1 0 -7.2 0M788.25 343.60a3.6 3.6 0 1 0 7.2 0a3.6 3.6 0 1 0 -7.2 0M790.70 343.60a3.6 3.6 0 1 0 7.2 0a3.6 3.6 0 1 0 -7.2 0M793.16 343.60a3.6 3.6 0 1 0 7.2 0a3.6 3.6 0 1 0 -7.2 0M795.62 343.60a3.6 3.6 0 1 0 7.2 0a3.6 3.6 0 1 0 -7.2 0M798.07 343.60a3.6 3.6 0 1 0 7.2 0a3.6 3.6 0 1 0 -7.2 0M800.53 343.60a3.6 3.6 0 1 0 7.2 0a3.6 3.6 0 1 0 -7.2 0M802.99 343.60a3.6 3.6 0 1 0 7.2 0a3.6 3.6 0 1 0 -7.2 0M805.45 343.60a3.6 3.6 0 1 0 7.2 0a3.6 3.6 0 1 0 -7.2 0M807.90 343.60a3.6 3.6 0 1 0 7.2 0a3.6 3.6 0 1 0 -7.2 0M810.36 343.60a3.6 3.6 0 1 0 7.2 0a3.6 3.6 0 1 0 -7.2 0M812.82 343.60a3.6 3.6 0 1 0 7.2 0a3.6 3.6 0 1 0 -7.2 0M815.28 343.60a3.6 3.6 0 1 0 7.2 0a3.6 3.6 0 1 0 -7.2 0M817.74 343.60a3.6 3.6 0 1 0 7.2 0a3.6 3.6 0 1 0 -7.2 0M820.19 343.60a3.6 3.6 0 1 0 7.2 0a3.6 3.6 0 1 0 -7.2 0M822.65 343.60a3.6 3.6 0 1 0 7.2 0a3.6 3.6 0 1 0 -7.2 0M825.11 343.60a3.6 3.6 0 1 0 7.2 0a3.6 3.6 0 1 0 -7.2 0M827.56 343.60a3.6 3.6 0 1 0 7.2 0a3.6 3.6 0 1 0 -7.2 0M830.02 343.60a3.6 3.6 0 1 0 7.2 0a3.6 3.6 0 1 0 -7.2 0M832.48 343.60a3.6 3.6 0 1 0 7.2 0a3.6 3.6 0 1 0 -7.2 0M834.94 343.60a3.6 3.6 0 1 0 7.2 0a3.6 3.6 0 1 0 -7.2 0M837.39 343.60a3.6 3.6 0 1 0 7.2 0a3.6 3.6 0 1 0 -7.2 0M839.85 343.60a3.6 3.6 0 1 0 7.2 0a3.6 3.6 0 1 0 -7.2 0M842.31 343.60a3.6 3.6 0 1 0 7.2 0a3.6 3.6 0 1 0 -7.2 0M844.77 343.60a3.6 3.6 0 1 0 7.2 0a3.6 3.6 0 1 0 -7.2 0M847.23 343.60a3.6 3.6 0 1 0 7.2 0a3.6 3.6 0 1 0 -7.2 0M849.68 343.60a3.6 3.6 0 1 0 7.2 0a3.6 3.6 0 1 0 -7.2 0M852.14 343.60a3.6 3.6 0 1 0 7.2 0a3.6 3.6 0 1 0 -7.2 0M854.60 343.60a3.6 3.6 0 1 0 7.2 0a3.6 3.6 0 1 0 -7.2 0M857.05 343.60a3.6 3.6 0 1 0 7.2 0a3.6 3.6 0 1 0 -7.2 0M859.51 343.60a3.6 3.6 0 1 0 7.2 0a3.6 3.6 0 1 0 -7.2 0M861.97 343.60a3.6 3.6 0 1 0 7.2 0a3.6 3.6 0 1 0 -7.2 0M864.43 343.60a3.6 3.6 0 1 0 7.2 0a3.6 3.6 0 1 0 -7.2 0M866.88 343.60a3.6 3.6 0 1 0 7.2 0a3.6 3.6 0 1 0 -7.2 0M869.34 343.60a3.6 3.6 0 1 0 7.2 0a3.6 3.6 0 1 0 -7.2 0M871.80 343.60a3.6 3.6 0 1 0 7.2 0a3.6 3.6 0 1 0 -7.2 0M874.26 343.60a3.6 3.6 0 1 0 7.2 0a3.6 3.6 0 1 0 -7.2 0M876.72 343.60a3.6 3.6 0 1 0 7.2 0a3.6 3.6 0 1 0 -7.2 0M879.17 343.60a3.6 3.6 0 1 0 7.2 0a3.6 3.6 0 1 0 -7.2 0M881.63 343.60a3.6 3.6 0 1 0 7.2 0a3.6 3.6 0 1 0 -7.2 0M884.09 343.60a3.6 3.6 0 1 0 7.2 0a3.6 3.6 0 1 0 -7.2 0M886.54 343.60a3.6 3.6 0 1 0 7.2 0a3.6 3.6 0 1 0 -7.2 0M889.00 343.60a3.6 3.6 0 1 0 7.2 0a3.6 3.6 0 1 0 -7.2 0M891.46 343.60a3.6 3.6 0 1 0 7.2 0a3.6 3.6 0 1 0 -7.2 0M893.92 343.60a3.6 3.6 0 1 0 7.2 0a3.6 3.6 0 1 0 -7.2 0M896.37 343.60a3.6 3.6 0 1 0 7.2 0a3.6 3.6 0 1 0 -7.2 0M898.83 343.60a3.6 3.6 0 1 0 7.2 0a3.6 3.6 0 1 0 -7.2 0M901.29 343.60a3.6 3.6 0 1 0 7.2 0a3.6 3.6 0 1 0 -7.2 0M903.75 343.60a3.6 3.6 0 1 0 7.2 0a3.6 3.6 0 1 0 -7.2 0M906.21 343.60a3.6 3.6 0 1 0 7.2 0a3.6 3.6 0 1 0 -7.2 0M908.66 343.60a3.6 3.6 0 1 0 7.2 0a3.6 3.6 0 1 0 -7.2 0M911.12 343.60a3.6 3.6 0 1 0 7.2 0a3.6 3.6 0 1 0 -7.2 0M913.58 343.60a3.6 3.6 0 1 0 7.2 0a3.6 3.6 0 1 0 -7.2 0M916.03 343.60a3.6 3.6 0 1 0 7.2 0a3.6 3.6 0 1 0 -7.2 0M918.49 343.60a3.6 3.6 0 1 0 7.2 0a3.6 3.6 0 1 0 -7.2 0M920.95 343.60a3.6 3.6 0 1 0 7.2 0a3.6 3.6 0 1 0 -7.2 0M923.41 343.60a3.6 3.6 0 1 0 7.2 0a3.6 3.6 0 1 0 -7.2 0M925.87 343.60a3.6 3.6 0 1 0 7.2 0a3.6 3.6 0 1 0 -7.2 0M928.32 343.60a3.6 3.6 0 1 0 7.2 0a3.6 3.6 0 1 0 -7.2 0M930.78 343.60a3.6 3.6 0 1 0 7.2 0a3.6 3.6 0 1 0 -7.2 0M933.24 343.60a3.6 3.6 0 1 0 7.2 0a3.6 3.6 0 1 0 -7.2 0M935.70 343.60a3.6 3.6 0 1 0 7.2 0a3.6 3.6 0 1 0 -7.2 0" stroke="#0000ff" stroke-width="1" fill="none"/>
<rect x="580.5" y="343.5" width="393.0" height="88.0" fill="none" stroke="#000" stroke-width="1"/>
<path d="M580.5 431.50v-4M580.5 343.50v4M629.5 431.50v-4M629.5 343.50v4M678.5 431.50v-4M678.5 343.50v4M727.5 431.50v-4M727.5 343.50v4M777.5 431.50v-4M777.5 343.50v4M826.5 431.50v-4M826.5 343.50v4M875.5 431.50v-4M875.5 343.50v4M924.5 431.50v-4M924.5 343.50v4M973.5 431.50v-4M973.5 343.50v4M580.50 431.5h4M973.50 431.5h-4M580.50 402.5h4M973.50 402.5h-4M580.50 372.5h4M973.50 372.5h-4M580.50 343.5h4M973.50 343.5h-4" stroke="#000" stroke-width="1" fill="none"/>
<path d="M580.50 372.95L582.96 431.65L585.41 402.30L587.87 402.30L590.33 372.95L592.79 343.60L595.25 372.95L597.70 343.60L600.16 372.95L602.62 372.95L605.08 372.95L607.53 372.95L609.99 343.60L612.45 343.60L614.90 343.60L617.36 372.95L619.82 402.30L622.28 402.30L624.74 343.60L627.19 372.95L629.65 343.60L632.11 343.60L634.57 343.60L637.02 343.60L639.48 372.95L641.94 343.60L644.39 343.60L646.85 343.60L649.31 343.60L651.77 343.60L654.23 372.95L656.68 372.95L659.14 343.60L661.60 343.60L664.06 343.60L666.51 343.60L668.97 343.60L671.43 343.60L673.88 343.60L676.34 343.60L678.80 372.95L681.26 343.60L683.72 372.95L686.17 343.60L688.63 372.95L691.09 343.60L693.55 343.60L696.00 372.95L698.46 372.95L700.92 343.60L703.38 343.60L705.83 343.60L708.29 343.60L710.75 343.60L713.21 343.60L715.66 343.60L718.12 343.60L720.58 343.60L723.04 343.60L725.49 343.60L727.95 343.60L730.41 343.60L732.87 343.60L735.32 343.60L737.78 343.60L740.24 343.60L742.70 343.60L745.15 343.60L747.61 343.60L750.07 343.60L752.52 343.60L754.98 343.60L757.44 343.60L759.90 343.60L762.36 343.60L764.81 343.60L767.27 343.60L769.73 343.60L772.18 343.60L774.64 343.60L777.10 343.60L779.56 343.60L782.01 343.60L784.47 343.60L786.93 343.60L789.39 343.60L791.85 343.60L794.30 343.60L796.76 343.60L799.22 343.60L801.67 343.60L804.13 343.60L806.59 343.60L809.05 343.60L811.50 343.60L813.96 343.60L816.42 343.60L818.88 343.60L821.34 343.60L823.79 343.60L826.25 343.60L828.71 343.60L831.16 343.60L833.62 343.60L836.08 343.60L838.54 343.60L841.00 343.60L843.45 343.60L845.91 343.60L848.37 343.60L850.83 343.60L853.28 343.60L855.74 343.60L858.20 343.60L860.65 343.60L863.11 343.60L865.57 343.60L868.03 343.60L870.49 343.60L872.94 343.60L875.40 343.60L877.86 343.60L880.32 343.60L882.77 343.60L885.23 343.60L887.69 343.60L890.14 343.60L892.60 343.60L895.06 343.60L897.52 343.60L899.97 343.60L902.43 343.60L904.89 343.60L907.35 343.60L909.81 343.60L912.26 343.60L914.72 343.60L917.18 343.60L919.63 343.60L922.09 343.60L924.55 343.60L927.01 343.60L929.47 343.60L931.92 343.60L934.38 343.60L936.84 343.60L939.30 343.60" stroke="#ff0000" stroke-width="1" fill="none" stroke-linejoin="round"/>
<path d="M576.50 372.95h8.0M580.50 368.95v8.0M577.60 370.05l5.8 5.8M577.60 375.85l5.8 -5.8M578.96 431.65h8.0M582.96 427.65v8.0M580.06 428.75l5.8 5.8M580.06 434.55l5.8 -5.8M581.41 402.30h8.0M585.41 398.30v8.0M582.51 399.40l5.8 5.8M582.51 405.20l5.8 -5.8M583.87 402.30h8.0M587.87 398.30v8.0M584.97 399.40l5.8 5.8M584.97 405.20l5.8 -5.8M586.33 372.95h8.0M590.33 368.95v8.0M587.43 370.05l5.8 5.8M587.43 375.85l5.8 -5.8M588.79 343.60h8.0M592.79 339.60v8.0M589.89 340.70l5.8 5.8M589.89 346.50l5.8 -5.8M591.25 372.95h8.0M595.25 368.95v8.0M592.35 370.05l5.8 5.8M592.35 375.85l5.8 -5.8M593.70 343.60h8.0M597.70 339.60v8.0M594.80 340.70l5.8 5.8M594.80 346.50l5.8 -5.8M596.16 372.95h8.0M600.16 368.95v8.0M597.26 370.05l5.8 5.8M597.26 375.85l5.8 -5.8M598.62 372.95h8.0M602.62 368.95v8.0M599.72 370.05l5.8 5.8M599.72 375.85l5.8 -5.8M601.08 372.95h8.0M605.08 368.95v8.0M602.18 370.05l5.8 5.8M602.18 375.85l5.8 -5.8M603.53 372.95h8.0M607.53 368.95v8.0M604.63 370.05l5.8 5.8M604.63 375.85l5.8 -5.8M605.99 343.60h8.0M609.99 339.60v8.0M607.09 340.70l5.8 5.8M607.09 346.50l5.8 -5.8M608.45 343.60h8.0M612.45 339.60v8.0M609.55 340.70l5.8 5.8M609.55 346.50l5.8 -5.8M610.90 343.60h8.0M614.90 339.60v8.0M612.00 340.70l5.8 5.8M612.00 346.50l5.8 -5.8M613.36 372.95h8.0M617.36 368.95v8.0M614.46 370.05l5.8 5.8M614.46 375.85l5.8 -5.8M615.82 402.30h8.0M619.82 398.30v8.0M616.92 399.40l5.8 5.8M616.92 405.20l5.8 -5.8M618.28 402.30h8.0M622.28 398.30v8.0M619.38 399.40l5.8 5.8M619.38 405.20l5.8 -5.8M620.74 343.60h8.0M624.74 339.60v8.0M621.84 340.70l5.8 5.8M621.84 346.50l5.8 -5.8M623.19 372.95h8.0M627.19 368.95v8.0M624.29 370.05l5.8 5.8M624.29 375.85l5.8 -5.8M625.65 343.60h8.0M629.65 339.60v8.0M626.75 340.70l5.8 5.8M626.75 346.50l5.8 -5.8M628.11 343.60h8.0M632.11 339.60v8.0M629.21 340.70l5.8 5.8M629.21 346.50l5.8 -5.8M630.57 343.60h8.0M634.57 339.60v8.0M631.67 340.70l5.8 5.8M631.67 346.50l5.8 -5.8M633.02 343.60h8.0M637.02 339.60v8.0M634.12 340.70l5.8 5.8M634.12 346.50l5.8 -5.8M635.48 372.95h8.0M639.48 368.95v8.0M636.58 370.05l5.8 5.8M636.58 375.85l5.8 -5.8M637.94 343.60h8.0M641.94 339.60v8.0M639.04 340.70l5.8 5.8M639.04 346.50l5.8 -5.8M640.39 343.60h8.0M644.39 339.60v8.0M641.50 340.70l5.8 5.8M641.50 346.50l5.8 -5.8M642.85 343.60h8.0M646.85 339.60v8.0M643.95 340.70l5.8 5.8M643.95 346.50l5.8 -5.8M645.31 343.60h8.0M649.31 339.60v8.0M646.41 340.70l5.8 5.8M646.41 346.50l5.8 -5.8M647.77 343.60h8.0M651.77 339.60v8.0M648.87 340.70l5.8 5.8M648.87 346.50l5.8 -5.8M650.23 372.95h8.0M654.23 368.95v8.0M651.33 370.05l5.8 5.8M651.33 375.85l5.8 -5.8M652.68 372.95h8.0M656.68 368.95v8.0M653.78 370.05l5.8 5.8M653.78 375.85l5.8 -5.8M655.14 343.60h8.0M659.14 339.60v8.0M656.24 340.70l5.8 5.8M656.24 346.50l5.8 -5.8M657.60 343.60h8.0M661.60 339.60v8.0M658.70 340.70l5.8 5.8M658.70 346.50l5.8 -5.8M660.06 343.60h8.0M664.06 339.60v8.0M661.16 340.70l5.8 5.8M661.16 346.50l5.8 -5.8M662.51 343.60h8.0M666.51 339.60v8.0M663.61 340.70l5.8 5.8M663.61 346.50l5.8 -5.8M664.97 343.60h8.0M668.97 339.60v8.0M666.07 340.70l5.8 5.8M666.07 346.50l5.8 -5.8M667.43 343.60h8.0M671.43 339.60v8.0M668.53 340.70l5.8 5.8M668.53 346.50l5.8 -5.8M669.88 343.60h8.0M673.88 339.60v8.0M670.99 340.70l5.8 5.8M670.99 346.50l5.8 -5.8M672.34 343.60h8.0M676.34 339.60v8.0M673.44 340.70l5.8 5.8M673.44 346.50l5.8 -5.8M674.80 372.95h8.0M678.80 368.95v8.0M675.90 370.05l5.8 5.8M675.90 375.85l5.8 -5.8M677.26 343.60h8.0M681.26 339.60v8.0M678.36 340.70l5.8 5.8M678.36 346.50l5.8 -5.8M679.72 372.95h8.0M683.72 368.95v8.0M680.82 370.05l5.8 5.8M680.82 375.85l5.8 -5.8M682.17 343.60h8.0M686.17 339.60v8.0M683.27 340.70l5.8 5.8M683.27 346.50l5.8 -5.8M684.63 372.95h8.0M688.63 368.95v8.0M685.73 370.05l5.8 5.8M685.73 375.85l5.8 -5.8M687.09 343.60h8.0M691.09 339.60v8.0M688.19 340.70l5.8 5.8M688.19 346.50l5.8 -5.8M689.55 343.60h8.0M693.55 339.60v8.0M690.65 340.70l5.8 5.8M690.65 346.50l5.8 -5.8M692.00 372.95h8.0M696.00 368.95v8.0M693.10 370.05l5.8 5.8M693.10 375.85l5.8 -5.8M694.46 372.95h8.0M698.46 368.95v8.0M695.56 370.05l5.8 5.8M695.56 375.85l5.8 -5.8M696.92 343.60h8.0M700.92 339.60v8.0M698.02 340.70l5.8 5.8M698.02 346.50l5.8 -5.8M699.38 343.60h8.0M703.38 339.60v8.0M700.48 340.70l5.8 5.8M700.48 346.50l5.8 -5.8M701.83 343.60h8.0M705.83 339.60v8.0M702.93 340.70l5.8 5.8M702.93 346.50l5.8 -5.8M704.29 343.60h8.0M708.29 339.60v8.0M705.39 340.70l5.8 5.8M705.39 346.50l5.8 -5.8M706.75 343.60h8.0M710.75 339.60v8.0M707.85 340.70l5.8 5.8M707.85 346.50l5.8 -5.8M709.21 343.60h8.0M713.21 339.60v8.0M710.31 340.70l5.8 5.8M710.31 346.50l5.8 -5.8M711.66 343.60h8.0M715.66 339.60v8.0M712.76 340.70l5.8 5.8M712.76 346.50l5.8 -5.8M714.12 343.60h8.0M718.12 339.60v8.0M715.22 340.70l5.8 5.8M715.22 346.50l5.8 -5.8M716.58 343.60h8.0M720.58 339.60v8.0M717.68 340.70l5.8 5.8M717.68 346.50l5.8 -5.8M719.04 343.60h8.0M723.04 339.60v8.0M720.14 340.70l5.8 5.8M720.14 346.50l5.8 -5.8M721.49 343.60h8.0M725.49 339.60v8.0M722.59 340.70l5.8 5.8M722.59 346.50l5.8 -5.8M723.95 343.60h8.0M727.95 339.60v8.0M725.05 340.70l5.8 5.8M725.05 346.50l5.8 -5.8M726.41 343.60h8.0M730.41 339.60v8.0M727.51 340.70l5.8 5.8M727.51 346.50l5.8 -5.8M728.87 343.60h8.0M732.87 339.60v8.0M729.97 340.70l5.8 5.8M729.97 346.50l5.8 -5.8M731.32 343.60h8.0M735.32 339.60v8.0M732.42 340.70l5.8 5.8M732.42 346.50l5.8 -5.8M733.78 343.60h8.0M737.78 339.60v8.0M734.88 340.70l5.8 5.8M734.88 346.50l5.8 -5.8M736.24 343.60h8.0M740.24 339.60v8.0M737.34 340.70l5.8 5.8M737.34 346.50l5.8 -5.8M738.70 343.60h8.0M742.70 339.60v8.0M739.80 340.70l5.8 5.8M739.80 346.50l5.8 -5.8M741.15 343.60h8.0M745.15 339.60v8.0M742.25 340.70l5.8 5.8M742.25 346.50l5.8 -5.8M743.61 343.60h8.0M747.61 339.60v8.0M744.71 340.70l5.8 5.8M744.71 346.50l5.8 -5.8M746.07 343.60h8.0M750.07 339.60v8.0M747.17 340.70l5.8 5.8M747.17 346.50l5.8 -5.8M748.52 343.60h8.0M752.52 339.60v8.0M749.62 340.70l5.8 5.8M749.62 346.50l5.8 -5.8M750.98 343.60h8.0M754.98 339.60v8.0M752.08 340.70l5.8 5.8M752.08 346.50l5.8 -5.8M753.44 343.60h8.0M757.44 339.60v8.0M754.54 340.70l5.8 5.8M754.54 346.50l5.8 -5.8M755.90 343.60h8.0M759.90 339.60v8.0M757.00 340.70l5.8 5.8M757.00 346.50l5.8 -5.8M758.36 343.60h8.0M762.36 339.60v8.0M759.46 340.70l5.8 5.8M759.46 346.50l5.8 -5.8M760.81 343.60h8.0M764.81 339.60v8.0M761.91 340.70l5.8 5.8M761.91 346.50l5.8 -5.8M763.27 343.60h8.0M767.27 339.60v8.0M764.37 340.70l5.8 5.8M764.37 346.50l5.8 -5.8M765.73 343.60h8.0M769.73 339.60v8.0M766.83 340.70l5.8 5.8M766.83 346.50l5.8 -5.8M768.18 343.60h8.0M772.18 339.60v8.0M769.28 340.70l5.8 5.8M769.28 346.50l5.8 -5.8M770.64 343.60h8.0M774.64 339.60v8.0M771.74 340.70l5.8 5.8M771.74 346.50l5.8 -5.8M773.10 343.60h8.0M777.10 339.60v8.0M774.20 340.70l5.8 5.8M774.20 346.50l5.8 -5.8M775.56 343.60h8.0M779.56 339.60v8.0M776.66 340.70l5.8 5.8M776.66 346.50l5.8 -5.8M778.01 343.60h8.0M782.01 339.60v8.0M779.12 340.70l5.8 5.8M779.12 346.50l5.8 -5.8M780.47 343.60h8.0M784.47 339.60v8.0M781.57 340.70l5.8 5.8M781.57 346.50l5.8 -5.8M782.93 343.60h8.0M786.93 339.60v8.0M784.03 340.70l5.8 5.8M784.03 346.50l5.8 -5.8M785.39 343.60h8.0M789.39 339.60v8.0M786.49 340.70l5.8 5.8M786.49 346.50l5.8 -5.8M787.85 343.60h8.0M791.85 339.60v8.0M788.95 340.70l5.8 5.8M788.95 346.50l5.8 -5.8M790.30 343.60h8.0M794.30 339.60v8.0M791.40 340.70l5.8 5.8M791.40 346.50l5.8 -5.8M792.76 343.60h8.0M796.76 339.60v8.0M793.86 340.70l5.8 5.8M793.86 346.50l5.8 -5.8M795.22 343.60h8.0M799.22 339.60v8.0M796.32 340.70l5.8 5.8M796.32 346.50l5.8 -5.8M797.67 343.60h8.0M801.67 339.60v8.0M798.77 340.70l5.8 5.8M798.77 346.50l5.8 -5.8M800.13 343.60h8.0M804.13 339.60v8.0M801.23 340.70l5.8 5.8M801.23 346.50l5.8 -5.8M802.59 343.60h8.0M806.59 339.60v8.0M803.69 340.70l5.8 5.8M803.69 346.50l5.8 -5.8M805.05 343.60h8.0M809.05 339.60v8.0M806.15 340.70l5.8 5.8M806.15 346.50l5.8 -5.8M807.50 343.60h8.0M811.50 339.60v8.0M808.61 340.70l5.8 5.8M808.61 346.50l5.8 -5.8M809.96 343.60h8.0M813.96 339.60v8.0M811.06 340.70l5.8 5.8M811.06 346.50l5.8 -5.8M812.42 343.60h8.0M816.42 339.60v8.0M813.52 340.70l5.8 5.8M813.52 346.50l5.8 -5.8M814.88 343.60h8.0M818.88 339.60v8.0M815.98 340.70l5.8 5.8M815.98 346.50l5.8 -5.8M817.34 343.60h8.0M821.34 339.60v8.0M818.44 340.70l5.8 5.8M818.44 346.50l5.8 -5.8M819.79 343.60h8.0M823.79 339.60v8.0M820.89 340.70l5.8 5.8M820.89 346.50l5.8 -5.8M822.25 343.60h8.0M826.25 339.60v8.0M823.35 340.70l5.8 5.8M823.35 346.50l5.8 -5.8M824.71 343.60h8.0M828.71 339.60v8.0M825.81 340.70l5.8 5.8M825.81 346.50l5.8 -5.8M827.16 343.60h8.0M831.16 339.60v8.0M828.26 340.70l5.8 5.8M828.26 346.50l5.8 -5.8M829.62 343.60h8.0M833.62 339.60v8.0M830.72 340.70l5.8 5.8M830.72 346.50l5.8 -5.8M832.08 343.60h8.0M836.08 339.60v8.0M833.18 340.70l5.8 5.8M833.18 346.50l5.8 -5.8M834.54 343.60h8.0M838.54 339.60v8.0M835.64 340.70l5.8 5.8M835.64 346.50l5.8 -5.8M837.00 343.60h8.0M841.00 339.60v8.0M838.10 340.70l5.8 5.8M838.10 346.50l5.8 -5.8M839.45 343.60h8.0M843.45 339.60v8.0M840.55 340.70l5.8 5.8M840.55 346.50l5.8 -5.8M841.91 343.60h8.0M845.91 339.60v8.0M843.01 340.70l5.8 5.8M843.01 346.50l5.8 -5.8M844.37 343.60h8.0M848.37 339.60v8.0M845.47 340.70l5.8 5.8M845.47 346.50l5.8 -5.8M846.83 343.60h8.0M850.83 339.60v8.0M847.93 340.70l5.8 5.8M847.93 346.50l5.8 -5.8M849.28 343.60h8.0M853.28 339.60v8.0M850.38 340.70l5.8 5.8M850.38 346.50l5.8 -5.8M851.74 343.60h8.0M855.74 339.60v8.0M852.84 340.70l5.8 5.8M852.84 346.50l5.8 -5.8M854.20 343.60h8.0M858.20 339.60v8.0M855.30 340.70l5.8 5.8M855.30 346.50l5.8 -5.8M856.65 343.60h8.0M860.65 339.60v8.0M857.75 340.70l5.8 5.8M857.75 346.50l5.8 -5.8M859.11 343.60h8.0M863.11 339.60v8.0M860.21 340.70l5.8 5.8M860.21 346.50l5.8 -5.8M861.57 343.60h8.0M865.57 339.60v8.0M862.67 340.70l5.8 5.8M862.67 346.50l5.8 -5.8M864.03 343.60h8.0M868.03 339.60v8.0M865.13 340.70l5.8 5.8M865.13 346.50l5.8 -5.8M866.49 343.60h8.0M870.49 339.60v8.0M867.59 340.70l5.8 5.8M867.59 346.50l5.8 -5.8M868.94 343.60h8.0M872.94 339.60v8.0M870.04 340.70l5.8 5.8M870.04 346.50l5.8 -5.8M871.40 343.60h8.0M875.40 339.60v8.0M872.50 340.70l5.8 5.8M872.50 346.50l5.8 -5.8M873.86 343.60h8.0M877.86 339.60v8.0M874.96 340.70l5.8 5.8M874.96 346.50l5.8 -5.8M876.32 343.60h8.0M880.32 339.60v8.0M877.42 340.70l5.8 5.8M877.42 346.50l5.8 -5.8M878.77 343.60h8.0M882.77 339.60v8.0M879.87 340.70l5.8 5.8M879.87 346.50l5.8 -5.8M881.23 343.60h8.0M885.23 339.60v8.0M882.33 340.70l5.8 5.8M882.33 346.50l5.8 -5.8M883.69 343.60h8.0M887.69 339.60v8.0M884.79 340.70l5.8 5.8M884.79 346.50l5.8 -5.8M886.14 343.60h8.0M890.14 339.60v8.0M887.25 340.70l5.8 5.8M887.25 346.50l5.8 -5.8M888.60 343.60h8.0M892.60 339.60v8.0M889.70 340.70l5.8 5.8M889.70 346.50l5.8 -5.8M891.06 343.60h8.0M895.06 339.60v8.0M892.16 340.70l5.8 5.8M892.16 346.50l5.8 -5.8M893.52 343.60h8.0M897.52 339.60v8.0M894.62 340.70l5.8 5.8M894.62 346.50l5.8 -5.8M895.97 343.60h8.0M899.97 339.60v8.0M897.07 340.70l5.8 5.8M897.07 346.50l5.8 -5.8M898.43 343.60h8.0M902.43 339.60v8.0M899.53 340.70l5.8 5.8M899.53 346.50l5.8 -5.8M900.89 343.60h8.0M904.89 339.60v8.0M901.99 340.70l5.8 5.8M901.99 346.50l5.8 -5.8M903.35 343.60h8.0M907.35 339.60v8.0M904.45 340.70l5.8 5.8M904.45 346.50l5.8 -5.8M905.81 343.60h8.0M909.81 339.60v8.0M906.91 340.70l5.8 5.8M906.91 346.50l5.8 -5.8M908.26 343.60h8.0M912.26 339.60v8.0M909.36 340.70l5.8 5.8M909.36 346.50l5.8 -5.8M910.72 343.60h8.0M914.72 339.60v8.0M911.82 340.70l5.8 5.8M911.82 346.50l5.8 -5.8M913.18 343.60h8.0M917.18 339.60v8.0M914.28 340.70l5.8 5.8M914.28 346.50l5.8 -5.8M915.63 343.60h8.0M919.63 339.60v8.0M916.74 340.70l5.8 5.8M916.74 346.50l5.8 -5.8M918.09 343.60h8.0M922.09 339.60v8.0M919.19 340.70l5.8 5.8M919.19 346.50l5.8 -5.8M920.55 343.60h8.0M924.55 339.60v8.0M921.65 340.70l5.8 5.8M921.65 346.50l5.8 -5.8M923.01 343.60h8.0M927.01 339.60v8.0M924.11 340.70l5.8 5.8M924.11 346.50l5.8 -5.8M925.47 343.60h8.0M929.47 339.60v8.0M926.57 340.70l5.8 5.8M926.57 346.50l5.8 -5.8M927.92 343.60h8.0M931.92 339.60v8.0M929.02 340.70l5.8 5.8M929.02 346.50l5.8 -5.8M930.38 343.60h8.0M934.38 339.60v8.0M931.48 340.70l5.8 5.8M931.48 346.50l5.8 -5.8M932.84 343.60h8.0M936.84 339.60v8.0M933.94 340.70l5.8 5.8M933.94 346.50l5.8 -5.8M935.30 343.60h8.0M939.30 339.60v8.0M936.40 340.70l5.8 5.8M936.40 346.50l5.8 -5.8" stroke="#ff0000" stroke-width="0.85" fill="none"/>
<text x="580.5" y="444.2" font-size="10.6" text-anchor="middle" fill="#000">0</text>
<text x="629.6" y="444.2" font-size="10.6" text-anchor="middle" fill="#000">1</text>
<text x="678.8" y="444.2" font-size="10.6" text-anchor="middle" fill="#000">2</text>
<text x="728.0" y="444.2" font-size="10.6" text-anchor="middle" fill="#000">3</text>
<text x="777.1" y="444.2" font-size="10.6" text-anchor="middle" fill="#000">4</text>
<text x="826.2" y="444.2" font-size="10.6" text-anchor="middle" fill="#000">5</text>
<text x="875.4" y="444.2" font-size="10.6" text-anchor="middle" fill="#000">6</text>
<text x="924.5" y="444.2" font-size="10.6" text-anchor="middle" fill="#000">7</text>
<text x="973.7" y="444.2" font-size="10.6" text-anchor="middle" fill="#000">8</text>
<text x="578.5" y="435.5" font-size="10.6" text-anchor="end" fill="#000">4</text>
<text x="578.5" y="406.1" font-size="10.6" text-anchor="end" fill="#000">5</text>
<text x="578.5" y="376.8" font-size="10.6" text-anchor="end" fill="#000">6</text>
<text x="578.5" y="347.4" font-size="10.6" text-anchor="end" fill="#000">7</text>
<text x="777.2" y="455.6" font-size="11.5" text-anchor="middle" fill="#000">time(s)</text>
<rect x="812.5" y="349.5" width="150" height="25" fill="#fff" stroke="#000" stroke-width="1"/>
<path d="M816 355.7H855" stroke="#0000ff" stroke-width="1"/><circle cx="835.5" cy="355.7" r="3.9" fill="none" stroke="#0000ff"/>
<path d="M816 367.7H855" stroke="#ff0000" stroke-width="1"/>
<path d="M831.5 367.7h8.0M835.5 363.7v8.0M832.6 364.8l5.8 5.8M832.6 370.59999999999997l5.8 -5.8" stroke="#ff0000" stroke-width="1"/>
<text x="859.4" y="359" font-size="9.5" fill="#000">Number Of Transmitted</text>
<text x="859.4" y="371" font-size="9.5" fill="#000">Number Of Received</text>
</svg><svg style="left:1px;top:26px" width="509" height="588" viewBox="1 26 509 588" font-family="Liberation Sans, sans-serif">
<rect x="0" y="24" width="512" height="592" fill="#f5f5f5"/>
<g fill="none" stroke="#303030" stroke-linejoin="round">
<path d="M513.0 73.0C510.3 72.9 501.8 72.5 497.0 72.4C492.2 72.3 487.4 72.1 484.0 72.3C480.6 72.5 479.8 72.3 476.5 73.8C473.2 75.3 468.2 78.3 464.0 81.3C459.8 84.3 454.8 88.4 451.5 91.9C448.2 95.4 445.9 99.1 444.0 102.5C442.1 105.9 441.1 108.8 440.3 112.5C439.5 116.2 439.5 119.8 439.4 125.0C439.3 130.2 439.6 137.2 439.9 143.8C440.1 150.4 440.4 155.9 440.9 164.4C441.4 172.9 442.6 189.9 443.0 195.0" stroke-width="15.999999999999998"/>
<path d="M440.9 164.4C441.2 169.5 442.3 186.1 443.0 195.0C443.7 203.9 444.5 209.8 444.9 218.0C445.3 226.2 445.1 236.2 445.5 244.0C445.9 251.8 446.6 257.3 447.0 265.0C447.4 272.7 447.8 278.5 448.0 290.0C448.2 301.5 447.9 323.7 448.0 334.0C448.1 344.3 448.4 344.5 448.6 352.0C448.8 359.5 448.7 364.8 449.0 379.0C449.3 393.2 450.0 419.5 450.5 437.0C451.0 454.5 451.8 476.2 452.0 484.0" stroke-width="17.4"/>
<path d="M452.0 484.0C452.3 493.3 453.0 518.3 453.6 540.0C454.2 561.7 455.4 601.7 455.8 614.0" stroke-width="19.4"/>
<path d="M440.9 164.0C441.3 167.0 441.9 176.5 443.5 182.0C445.1 187.5 447.5 191.5 450.5 197.0C453.5 202.5 458.0 209.9 461.5 215.0C465.0 220.1 467.8 222.5 471.5 227.5C475.2 232.5 480.9 240.4 484.0 245.0C487.1 249.6 488.5 251.6 490.3 255.0C492.1 258.4 493.5 261.6 494.6 265.6C495.7 269.6 496.4 275.1 496.8 279.0C497.2 282.9 497.2 284.5 497.1 288.8C497.0 293.1 496.6 300.0 495.9 305.0C495.2 310.0 494.1 314.6 492.8 318.8C491.5 323.0 490.1 327.1 487.8 330.0C485.5 332.9 481.9 334.4 479.0 336.3C476.1 338.2 473.0 339.9 470.3 341.3C467.6 342.7 466.4 343.0 462.8 344.8C459.2 346.6 451.3 350.8 449.0 352.0" stroke-width="17.4"/>
<path d="M331.4 326.6C332.6 325.7 331.7 326.5 338.5 320.9C345.3 315.3 364.7 299.2 372.3 293.1C379.9 287.0 380.1 286.5 384.0 284.5C387.9 282.5 390.7 282.1 396.0 281.2C401.3 280.2 408.7 279.2 416.0 278.8C423.3 278.4 433.3 279.0 440.0 279.0C446.7 279.0 448.2 279.0 456.0 279.0C463.8 279.0 479.7 278.9 486.5 279.0C493.3 279.1 495.2 279.4 497.0 279.5" stroke-width="17.4"/>
<path d="M388.3 285.0C388.4 287.5 388.5 290.8 388.7 300.0C388.9 309.2 389.2 326.8 389.4 340.0C389.6 353.2 389.9 370.3 390.0 379.0C390.1 387.7 390.2 389.8 390.3 392.0" stroke-width="17.4"/>
<path d="M309.0 428.2C311.1 427.5 316.4 425.9 321.6 423.8C326.8 421.7 330.1 419.9 340.0 415.5C349.9 411.1 369.8 402.5 380.9 397.6C391.9 392.7 397.5 390.0 406.3 385.9C415.1 381.8 426.7 376.6 433.8 373.2C440.9 369.8 446.5 366.9 449.0 365.7" stroke-width="18.2"/>
<path d="M280.1 350.5a30.4 30.4 0 1 0 60.8 0a30.4 30.4 0 1 0 -60.8 0" stroke-width="17.4"/>
<path d="M309.2 380.0C309.1 385.2 308.9 401.0 308.9 411.0C308.8 421.0 308.9 421.8 308.9 440.0C308.9 458.2 308.8 491.0 308.8 520.0C308.8 549.0 308.8 598.3 308.8 614.0" stroke-width="17.799999999999997"/>
<path d="M282.0 351.0C280.0 351.2 273.8 351.2 269.8 352.0C265.8 352.8 262.0 354.0 258.0 356.0C254.0 358.0 249.9 360.6 245.9 363.8C241.9 367.0 237.3 371.2 233.8 375.1C230.3 379.0 227.4 382.6 225.1 387.2C222.8 391.8 221.5 397.3 220.2 402.8C218.9 408.3 218.1 413.8 217.3 420.2C216.5 426.6 216.0 434.1 215.6 441.0C215.2 447.9 214.8 456.2 214.7 461.8C214.5 467.4 214.6 470.8 214.7 474.8C214.8 478.8 214.9 484.1 215.0 486.0" stroke-width="18.2"/>
<path d="M215.0 486.0C214.9 491.7 214.9 507.7 214.2 520.0C213.5 532.3 211.9 548.3 210.8 560.0C209.7 571.7 208.6 581.0 207.6 590.0C206.6 599.0 205.3 610.0 204.9 614.0" stroke-width="19.799999999999997"/>
<path d="M215.0 486.1C229.2 486.3 260.8 486.6 300.0 487.0C339.2 487.4 414.7 488.3 450.0 488.6C485.3 489.0 501.7 489.2 512.0 489.3" stroke-width="10.0"/>
<path d="M215.0 515.8C229.2 516.0 260.8 516.4 300.0 516.9C339.2 517.4 414.7 518.3 450.0 518.7C485.3 519.2 501.7 519.4 512.0 519.5" stroke-width="10.0"/>
<path d="M214 486H198.6A15.2 15.2 0 0 0 198.6 516.2H214" stroke-width="10.0"/>
</g>
<g fill="#cecece" stroke="#303030" stroke-width="1.2" stroke-linejoin="round">
<path d="M432.6 167.0L449.2 167.0L449.6 172.0L452.0 180.0L457.8 192.5L464.0 202.5L470.3 211.3L457.5 221.5L452.5 215.6L453.4 219.0L437.6 219.0Z"/>
<path d="M437.6 244.0L438.0 256.3L437.8 258.8L434.0 265.0L426.5 270.4L416.0 270.4L416.0 287.6L456.5 287.6L455.5 270.6L454.0 244.0Z"/>
<path d="M486.5 270.5L502.0 262.0L505.5 270.0L506.0 287.0L488.0 288.5Z"/>
<path d="M368.5 285.0L384.0 277.5L393.4 273.1L396.5 289.4L397.1 301.3L380.3 301.3L379.8 298.8L375.0 293.0Z"/>
<path d="M381.3 379.0L398.7 379.0L402.8 377.5L409.8 392.9L384.4 404.6L377.4 389.2L381.5 387.3Z"/>
<path d="M439.6 334.0L457.0 334.0L459.2 337.0L466.4 352.5L457.8 360.0L457.8 379.6L440.4 379.6L437.3 380.2L430.3 364.8L438.7 354.9L440.1 352.0Z"/>
<path d="M300.6 411.3L317.3 411.3L317.3 438.0L300.6 438.0Z"/>
<path d="M317.0 424.0L321.4 422.2L322.4 425.2L317.0 427.4Z"/>
<path d="M205.5 478.0L224.0 478.0L224.0 492.0L205.5 492.0Z"/>
<path d="M205.0 510.5L223.5 510.5L223.0 525.0L204.5 525.0Z"/>
<path d="M300.2 481.0L317.6 481.0L317.6 492.6L300.2 492.6Z"/>
<path d="M300.2 511.5L317.6 511.5L317.6 522.6L300.2 522.6Z"/>
<path d="M443.0 483.8L461.0 483.8L461.3 493.6L443.4 493.6Z"/>
<path d="M444.0 513.4L462.0 513.4L462.4 524.2L444.4 524.2Z"/>
</g>
<g fill="none" stroke="#f0f0f0" stroke-linejoin="round">
<path d="M513.0 73.0C510.3 72.9 501.8 72.5 497.0 72.4C492.2 72.3 487.4 72.1 484.0 72.3C480.6 72.5 479.8 72.3 476.5 73.8C473.2 75.3 468.2 78.3 464.0 81.3C459.8 84.3 454.8 88.4 451.5 91.9C448.2 95.4 445.9 99.1 444.0 102.5C442.1 105.9 441.1 108.8 440.3 112.5C439.5 116.2 439.5 119.8 439.4 125.0C439.3 130.2 439.6 137.2 439.9 143.8C440.1 150.4 440.4 155.9 440.9 164.4C441.4 172.9 442.6 189.9 443.0 195.0" stroke-width="14.199999999999998"/>
<path d="M440.9 164.4C441.2 169.5 442.3 186.1 443.0 195.0C443.7 203.9 444.5 209.8 444.9 218.0C445.3 226.2 445.1 236.2 445.5 244.0C445.9 251.8 446.6 257.3 447.0 265.0C447.4 272.7 447.8 278.5 448.0 290.0C448.2 301.5 447.9 323.7 448.0 334.0C448.1 344.3 448.4 344.5 448.6 352.0C448.8 359.5 448.7 364.8 449.0 379.0C449.3 393.2 450.0 419.5 450.5 437.0C451.0 454.5 451.8 476.2 452.0 484.0" stroke-width="15.599999999999998"/>
<path d="M452.0 484.0C452.3 493.3 453.0 518.3 453.6 540.0C454.2 561.7 455.4 601.7 455.8 614.0" stroke-width="17.599999999999998"/>
<path d="M440.9 164.0C441.3 167.0 441.9 176.5 443.5 182.0C445.1 187.5 447.5 191.5 450.5 197.0C453.5 202.5 458.0 209.9 461.5 215.0C465.0 220.1 467.8 222.5 471.5 227.5C475.2 232.5 480.9 240.4 484.0 245.0C487.1 249.6 488.5 251.6 490.3 255.0C492.1 258.4 493.5 261.6 494.6 265.6C495.7 269.6 496.4 275.1 496.8 279.0C497.2 282.9 497.2 284.5 497.1 288.8C497.0 293.1 496.6 300.0 495.9 305.0C495.2 310.0 494.1 314.6 492.8 318.8C491.5 323.0 490.1 327.1 487.8 330.0C485.5 332.9 481.9 334.4 479.0 336.3C476.1 338.2 473.0 339.9 470.3 341.3C467.6 342.7 466.4 343.0 462.8 344.8C459.2 346.6 451.3 350.8 449.0 352.0" stroke-width="15.599999999999998"/>
<path d="M331.4 326.6C332.6 325.7 331.7 326.5 338.5 320.9C345.3 315.3 364.7 299.2 372.3 293.1C379.9 287.0 380.1 286.5 384.0 284.5C387.9 282.5 390.7 282.1 396.0 281.2C401.3 280.2 408.7 279.2 416.0 278.8C423.3 278.4 433.3 279.0 440.0 279.0C446.7 279.0 448.2 279.0 456.0 279.0C463.8 279.0 479.7 278.9 486.5 279.0C493.3 279.1 495.2 279.4 497.0 279.5" stroke-width="15.599999999999998"/>
<path d="M388.3 285.0C388.4 287.5 388.5 290.8 388.7 300.0C388.9 309.2 389.2 326.8 389.4 340.0C389.6 353.2 389.9 370.3 390.0 379.0C390.1 387.7 390.2 389.8 390.3 392.0" stroke-width="15.599999999999998"/>
<path d="M309.0 428.2C311.1 427.5 316.4 425.9 321.6 423.8C326.8 421.7 330.1 419.9 340.0 415.5C349.9 411.1 369.8 402.5 380.9 397.6C391.9 392.7 397.5 390.0 406.3 385.9C415.1 381.8 426.7 376.6 433.8 373.2C440.9 369.8 446.5 366.9 449.0 365.7" stroke-width="16.4"/>
<path d="M280.1 350.5a30.4 30.4 0 1 0 60.8 0a30.4 30.4 0 1 0 -60.8 0" stroke-width="15.599999999999998"/>
<path d="M309.2 380.0C309.1 385.2 308.9 401.0 308.9 411.0C308.8 421.0 308.9 421.8 308.9 440.0C308.9 458.2 308.8 491.0 308.8 520.0C308.8 549.0 308.8 598.3 308.8 614.0" stroke-width="15.999999999999996"/>
<path d="M282.0 351.0C280.0 351.2 273.8 351.2 269.8 352.0C265.8 352.8 262.0 354.0 258.0 356.0C254.0 358.0 249.9 360.6 245.9 363.8C241.9 367.0 237.3 371.2 233.8 375.1C230.3 379.0 227.4 382.6 225.1 387.2C222.8 391.8 221.5 397.3 220.2 402.8C218.9 408.3 218.1 413.8 217.3 420.2C216.5 426.6 216.0 434.1 215.6 441.0C215.2 447.9 214.8 456.2 214.7 461.8C214.5 467.4 214.6 470.8 214.7 474.8C214.8 478.8 214.9 484.1 215.0 486.0" stroke-width="16.4"/>
<path d="M215.0 486.0C214.9 491.7 214.9 507.7 214.2 520.0C213.5 532.3 211.9 548.3 210.8 560.0C209.7 571.7 208.6 581.0 207.6 590.0C206.6 599.0 205.3 610.0 204.9 614.0" stroke-width="17.999999999999996"/>
<path d="M215.0 486.1C229.2 486.3 260.8 486.6 300.0 487.0C339.2 487.4 414.7 488.3 450.0 488.6C485.3 489.0 501.7 489.2 512.0 489.3" stroke-width="8.2"/>
<path d="M215.0 515.8C229.2 516.0 260.8 516.4 300.0 516.9C339.2 517.4 414.7 518.3 450.0 518.7C485.3 519.2 501.7 519.4 512.0 519.5" stroke-width="8.2"/>
<path d="M214 486H198.6A15.2 15.2 0 0 0 198.6 516.2H214" stroke-width="8.2"/>
</g>
<g fill="none" stroke="#cecece" stroke-linejoin="round">
<path d="M513.0 73.0C510.3 72.9 501.8 72.5 497.0 72.4C492.2 72.3 487.4 72.1 484.0 72.3C480.6 72.5 479.8 72.3 476.5 73.8C473.2 75.3 468.2 78.3 464.0 81.3C459.8 84.3 454.8 88.4 451.5 91.9C448.2 95.4 445.9 99.1 444.0 102.5C442.1 105.9 441.1 108.8 440.3 112.5C439.5 116.2 439.5 119.8 439.4 125.0C439.3 130.2 439.6 137.2 439.9 143.8C440.1 150.4 440.4 155.9 440.9 164.4C441.4 172.9 442.6 189.9 443.0 195.0" stroke-width="12.999999999999998"/>
<path d="M440.9 164.4C441.2 169.5 442.3 186.1 443.0 195.0C443.7 203.9 444.5 209.8 444.9 218.0C445.3 226.2 445.1 236.2 445.5 244.0C445.9 251.8 446.6 257.3 447.0 265.0C447.4 272.7 447.8 278.5 448.0 290.0C448.2 301.5 447.9 323.7 448.0 334.0C448.1 344.3 448.4 344.5 448.6 352.0C448.8 359.5 448.7 364.8 449.0 379.0C449.3 393.2 450.0 419.5 450.5 437.0C451.0 454.5 451.8 476.2 452.0 484.0" stroke-width="14.399999999999999"/>
<path d="M452.0 484.0C452.3 493.3 453.0 518.3 453.6 540.0C454.2 561.7 455.4 601.7 455.8 614.0" stroke-width="16.4"/>
<path d="M440.9 164.0C441.3 167.0 441.9 176.5 443.5 182.0C445.1 187.5 447.5 191.5 450.5 197.0C453.5 202.5 458.0 209.9 461.5 215.0C465.0 220.1 467.8 222.5 471.5 227.5C475.2 232.5 480.9 240.4 484.0 245.0C487.1 249.6 488.5 251.6 490.3 255.0C492.1 258.4 493.5 261.6 494.6 265.6C495.7 269.6 496.4 275.1 496.8 279.0C497.2 282.9 497.2 284.5 497.1 288.8C497.0 293.1 496.6 300.0 495.9 305.0C495.2 310.0 494.1 314.6 492.8 318.8C491.5 323.0 490.1 327.1 487.8 330.0C485.5 332.9 481.9 334.4 479.0 336.3C476.1 338.2 473.0 339.9 470.3 341.3C467.6 342.7 466.4 343.0 462.8 344.8C459.2 346.6 451.3 350.8 449.0 352.0" stroke-width="14.399999999999999"/>
<path d="M331.4 326.6C332.6 325.7 331.7 326.5 338.5 320.9C345.3 315.3 364.7 299.2 372.3 293.1C379.9 287.0 380.1 286.5 384.0 284.5C387.9 282.5 390.7 282.1 396.0 281.2C401.3 280.2 408.7 279.2 416.0 278.8C423.3 278.4 433.3 279.0 440.0 279.0C446.7 279.0 448.2 279.0 456.0 279.0C463.8 279.0 479.7 278.9 486.5 279.0C493.3 279.1 495.2 279.4 497.0 279.5" stroke-width="14.399999999999999"/>
<path d="M388.3 285.0C388.4 287.5 388.5 290.8 388.7 300.0C388.9 309.2 389.2 326.8 389.4 340.0C389.6 353.2 389.9 370.3 390.0 379.0C390.1 387.7 390.2 389.8 390.3 392.0" stroke-width="14.399999999999999"/>
<path d="M309.0 428.2C311.1 427.5 316.4 425.9 321.6 423.8C326.8 421.7 330.1 419.9 340.0 415.5C349.9 411.1 369.8 402.5 380.9 397.6C391.9 392.7 397.5 390.0 406.3 385.9C415.1 381.8 426.7 376.6 433.8 373.2C440.9 369.8 446.5 366.9 449.0 365.7" stroke-width="15.2"/>
<path d="M280.1 350.5a30.4 30.4 0 1 0 60.8 0a30.4 30.4 0 1 0 -60.8 0" stroke-width="14.399999999999999"/>
<path d="M309.2 380.0C309.1 385.2 308.9 401.0 308.9 411.0C308.8 421.0 308.9 421.8 308.9 440.0C308.9 458.2 308.8 491.0 308.8 520.0C308.8 549.0 308.8 598.3 308.8 614.0" stroke-width="14.799999999999997"/>
<path d="M282.0 351.0C280.0 351.2 273.8 351.2 269.8 352.0C265.8 352.8 262.0 354.0 258.0 356.0C254.0 358.0 249.9 360.6 245.9 363.8C241.9 367.0 237.3 371.2 233.8 375.1C230.3 379.0 227.4 382.6 225.1 387.2C222.8 391.8 221.5 397.3 220.2 402.8C218.9 408.3 218.1 413.8 217.3 420.2C216.5 426.6 216.0 434.1 215.6 441.0C215.2 447.9 214.8 456.2 214.7 461.8C214.5 467.4 214.6 470.8 214.7 474.8C214.8 478.8 214.9 484.1 215.0 486.0" stroke-width="15.2"/>
<path d="M215.0 486.0C214.9 491.7 214.9 507.7 214.2 520.0C213.5 532.3 211.9 548.3 210.8 560.0C209.7 571.7 208.6 581.0 207.6 590.0C206.6 599.0 205.3 610.0 204.9 614.0" stroke-width="16.799999999999997"/>
<path d="M215.0 486.1C229.2 486.3 260.8 486.6 300.0 487.0C339.2 487.4 414.7 488.3 450.0 488.6C485.3 489.0 501.7 489.2 512.0 489.3" stroke-width="8.6"/>
<path d="M215.0 515.8C229.2 516.0 260.8 516.4 300.0 516.9C339.2 517.4 414.7 518.3 450.0 518.7C485.3 519.2 501.7 519.4 512.0 519.5" stroke-width="8.6"/>
<path d="M214 486H198.6A15.2 15.2 0 0 0 198.6 516.2H214" stroke-width="8.6"/>
</g>
<g fill="none" stroke="#adadad" stroke-dasharray="0.7 3.2">
<path d="M513.0 73.0C510.3 72.9 501.8 72.5 497.0 72.4C492.2 72.3 487.4 72.1 484.0 72.3C480.6 72.5 479.8 72.3 476.5 73.8C473.2 75.3 468.2 78.3 464.0 81.3C459.8 84.3 454.8 88.4 451.5 91.9C448.2 95.4 445.9 99.1 444.0 102.5C442.1 105.9 441.1 108.8 440.3 112.5C439.5 116.2 439.5 119.8 439.4 125.0C439.3 130.2 439.6 137.2 439.9 143.8C440.1 150.4 440.4 155.9 440.9 164.4C441.4 172.9 442.6 189.9 443.0 195.0" stroke-width="12.999999999999998"/>
<path d="M440.9 164.4C441.2 169.5 442.3 186.1 443.0 195.0C443.7 203.9 444.5 209.8 444.9 218.0C445.3 226.2 445.1 236.2 445.5 244.0C445.9 251.8 446.6 257.3 447.0 265.0C447.4 272.7 447.8 278.5 448.0 290.0C448.2 301.5 447.9 323.7 448.0 334.0C448.1 344.3 448.4 344.5 448.6 352.0C448.8 359.5 448.7 364.8 449.0 379.0C449.3 393.2 450.0 419.5 450.5 437.0C451.0 454.5 451.8 476.2 452.0 484.0" stroke-width="14.399999999999999"/>
<path d="M452.0 484.0C452.3 493.3 453.0 518.3 453.6 540.0C454.2 561.7 455.4 601.7 455.8 614.0" stroke-width="16.4"/>
<path d="M440.9 164.0C441.3 167.0 441.9 176.5 443.5 182.0C445.1 187.5 447.5 191.5 450.5 197.0C453.5 202.5 458.0 209.9 461.5 215.0C465.0 220.1 467.8 222.5 471.5 227.5C475.2 232.5 480.9 240.4 484.0 245.0C487.1 249.6 488.5 251.6 490.3 255.0C492.1 258.4 493.5 261.6 494.6 265.6C495.7 269.6 496.4 275.1 496.8 279.0C497.2 282.9 497.2 284.5 497.1 288.8C497.0 293.1 496.6 300.0 495.9 305.0C495.2 310.0 494.1 314.6 492.8 318.8C491.5 323.0 490.1 327.1 487.8 330.0C485.5 332.9 481.9 334.4 479.0 336.3C476.1 338.2 473.0 339.9 470.3 341.3C467.6 342.7 466.4 343.0 462.8 344.8C459.2 346.6 451.3 350.8 449.0 352.0" stroke-width="14.399999999999999"/>
<path d="M331.4 326.6C332.6 325.7 331.7 326.5 338.5 320.9C345.3 315.3 364.7 299.2 372.3 293.1C379.9 287.0 380.1 286.5 384.0 284.5C387.9 282.5 390.7 282.1 396.0 281.2C401.3 280.2 408.7 279.2 416.0 278.8C423.3 278.4 433.3 279.0 440.0 279.0C446.7 279.0 448.2 279.0 456.0 279.0C463.8 279.0 479.7 278.9 486.5 279.0C493.3 279.1 495.2 279.4 497.0 279.5" stroke-width="14.399999999999999"/>
<path d="M388.3 285.0C388.4 287.5 388.5 290.8 388.7 300.0C388.9 309.2 389.2 326.8 389.4 340.0C389.6 353.2 389.9 370.3 390.0 379.0C390.1 387.7 390.2 389.8 390.3 392.0" stroke-width="14.399999999999999"/>
<path d="M309.0 428.2C311.1 427.5 316.4 425.9 321.6 423.8C326.8 421.7 330.1 419.9 340.0 415.5C349.9 411.1 369.8 402.5 380.9 397.6C391.9 392.7 397.5 390.0 406.3 385.9C415.1 381.8 426.7 376.6 433.8 373.2C440.9 369.8 446.5 366.9 449.0 365.7" stroke-width="15.2"/>
<path d="M280.1 350.5a30.4 30.4 0 1 0 60.8 0a30.4 30.4 0 1 0 -60.8 0" stroke-width="14.399999999999999"/>
<path d="M309.2 380.0C309.1 385.2 308.9 401.0 308.9 411.0C308.8 421.0 308.9 421.8 308.9 440.0C308.9 458.2 308.8 491.0 308.8 520.0C308.8 549.0 308.8 598.3 308.8 614.0" stroke-width="14.799999999999997"/>
<path d="M282.0 351.0C280.0 351.2 273.8 351.2 269.8 352.0C265.8 352.8 262.0 354.0 258.0 356.0C254.0 358.0 249.9 360.6 245.9 363.8C241.9 367.0 237.3 371.2 233.8 375.1C230.3 379.0 227.4 382.6 225.1 387.2C222.8 391.8 221.5 397.3 220.2 402.8C218.9 408.3 218.1 413.8 217.3 420.2C216.5 426.6 216.0 434.1 215.6 441.0C215.2 447.9 214.8 456.2 214.7 461.8C214.5 467.4 214.6 470.8 214.7 474.8C214.8 478.8 214.9 484.1 215.0 486.0" stroke-width="15.2"/>
<path d="M215.0 486.0C214.9 491.7 214.9 507.7 214.2 520.0C213.5 532.3 211.9 548.3 210.8 560.0C209.7 571.7 208.6 581.0 207.6 590.0C206.6 599.0 205.3 610.0 204.9 614.0" stroke-width="16.799999999999997"/>
<path d="M215.0 486.1C229.2 486.3 260.8 486.6 300.0 487.0C339.2 487.4 414.7 488.3 450.0 488.6C485.3 489.0 501.7 489.2 512.0 489.3" stroke-width="8.6"/>
<path d="M215.0 515.8C229.2 516.0 260.8 516.4 300.0 516.9C339.2 517.4 414.7 518.3 450.0 518.7C485.3 519.2 501.7 519.4 512.0 519.5" stroke-width="8.6"/>
<path d="M214 486H198.6A15.2 15.2 0 0 0 198.6 516.2H214" stroke-width="8.6"/>
</g>
<g fill="none" stroke="#fbd84c" stroke-width="2.1">
<path d="M513.0 73.0C510.3 72.9 501.8 72.5 497.0 72.4C492.2 72.3 487.4 72.1 484.0 72.3C480.6 72.5 479.8 72.3 476.5 73.8C473.2 75.3 468.2 78.3 464.0 81.3C459.8 84.3 454.8 88.4 451.5 91.9C448.2 95.4 445.9 99.1 444.0 102.5C442.1 105.9 441.1 108.8 440.3 112.5C439.5 116.2 439.5 119.8 439.4 125.0C439.3 130.2 439.6 137.2 439.9 143.8C440.1 150.4 440.4 155.9 440.9 164.4C441.4 172.9 442.6 189.9 443.0 195.0"/>
<path d="M440.9 164.4C441.2 169.5 442.3 186.1 443.0 195.0C443.7 203.9 444.5 209.8 444.9 218.0C445.3 226.2 445.1 236.2 445.5 244.0C445.9 251.8 446.6 257.3 447.0 265.0C447.4 272.7 447.8 278.5 448.0 290.0C448.2 301.5 447.9 323.7 448.0 334.0C448.1 344.3 448.4 344.5 448.6 352.0C448.8 359.5 448.7 364.8 449.0 379.0C449.3 393.2 450.0 419.5 450.5 437.0C451.0 454.5 451.8 476.2 452.0 484.0"/>
<path d="M452.0 484.0C452.3 493.3 453.0 518.3 453.6 540.0C454.2 561.7 455.4 601.7 455.8 614.0"/>
<path d="M440.9 164.0C441.3 167.0 441.9 176.5 443.5 182.0C445.1 187.5 447.5 191.5 450.5 197.0C453.5 202.5 458.0 209.9 461.5 215.0C465.0 220.1 467.8 222.5 471.5 227.5C475.2 232.5 480.9 240.4 484.0 245.0C487.1 249.6 488.5 251.6 490.3 255.0C492.1 258.4 493.5 261.6 494.6 265.6C495.7 269.6 496.4 275.1 496.8 279.0C497.2 282.9 497.2 284.5 497.1 288.8C497.0 293.1 496.6 300.0 495.9 305.0C495.2 310.0 494.1 314.6 492.8 318.8C491.5 323.0 490.1 327.1 487.8 330.0C485.5 332.9 481.9 334.4 479.0 336.3C476.1 338.2 473.0 339.9 470.3 341.3C467.6 342.7 466.4 343.0 462.8 344.8C459.2 346.6 451.3 350.8 449.0 352.0"/>
<path d="M331.4 326.6C332.6 325.7 331.7 326.5 338.5 320.9C345.3 315.3 364.7 299.2 372.3 293.1C379.9 287.0 380.1 286.5 384.0 284.5C387.9 282.5 390.7 282.1 396.0 281.2C401.3 280.2 408.7 279.2 416.0 278.8C423.3 278.4 433.3 279.0 440.0 279.0C446.7 279.0 448.2 279.0 456.0 279.0C463.8 279.0 479.7 278.9 486.5 279.0C493.3 279.1 495.2 279.4 497.0 279.5"/>
<path d="M388.3 285.0C388.4 287.5 388.5 290.8 388.7 300.0C388.9 309.2 389.2 326.8 389.4 340.0C389.6 353.2 389.9 370.3 390.0 379.0C390.1 387.7 390.2 389.8 390.3 392.0"/>
<path d="M309.0 428.2C311.1 427.5 316.4 425.9 321.6 423.8C326.8 421.7 330.1 419.9 340.0 415.5C349.9 411.1 369.8 402.5 380.9 397.6C391.9 392.7 397.5 390.0 406.3 385.9C415.1 381.8 426.7 376.6 433.8 373.2C440.9 369.8 446.5 366.9 449.0 365.7"/>
<path d="M280.1 350.5a30.4 30.4 0 1 0 60.8 0a30.4 30.4 0 1 0 -60.8 0"/>
<path d="M309.2 380.0C309.1 385.2 308.9 401.0 308.9 411.0C308.8 421.0 308.9 421.8 308.9 440.0C308.9 458.2 308.8 491.0 308.8 520.0C308.8 549.0 308.8 598.3 308.8 614.0"/>
<path d="M282.0 351.0C280.0 351.2 273.8 351.2 269.8 352.0C265.8 352.8 262.0 354.0 258.0 356.0C254.0 358.0 249.9 360.6 245.9 363.8C241.9 367.0 237.3 371.2 233.8 375.1C230.3 379.0 227.4 382.6 225.1 387.2C222.8 391.8 221.5 397.3 220.2 402.8C218.9 408.3 218.1 413.8 217.3 420.2C216.5 426.6 216.0 434.1 215.6 441.0C215.2 447.9 214.8 456.2 214.7 461.8C214.5 467.4 214.6 470.8 214.7 474.8C214.8 478.8 214.9 484.1 215.0 486.0"/>
<path d="M215.0 486.0C214.9 491.7 214.9 507.7 214.2 520.0C213.5 532.3 211.9 548.3 210.8 560.0C209.7 571.7 208.6 581.0 207.6 590.0C206.6 599.0 205.3 610.0 204.9 614.0"/>
</g>
<path d="M224.0 490.8C272.0 491.3 464.0 493.4 512.0 493.9" stroke="#d9c36a" stroke-width="0.8" fill="none"/>
<path d="M224.0 511.3C272.0 511.9 464.0 514.3 512.0 514.9" stroke="#ecd46a" stroke-width="0.9" fill="none"/>
<path d="M206 490.8H198.6A10.6 10.6 0 0 0 198.6 511.6H206" stroke="#f0d050" stroke-width="1" fill="none"/>
<g fill="#cecece">
<path d="M432.6 167.0L449.2 167.0L449.6 172.0L452.0 180.0L457.8 192.5L464.0 202.5L470.3 211.3L457.5 221.5L452.5 215.6L453.4 219.0L437.6 219.0Z"/>
<path d="M437.6 244.0L438.0 256.3L437.8 258.8L434.0 265.0L426.5 270.4L416.0 270.4L416.0 287.6L456.5 287.6L455.5 270.6L454.0 244.0Z"/>
<path d="M486.5 270.5L502.0 262.0L505.5 270.0L506.0 287.0L488.0 288.5Z"/>
<path d="M368.5 285.0L384.0 277.5L393.4 273.1L396.5 289.4L397.1 301.3L380.3 301.3L379.8 298.8L375.0 293.0Z"/>
<path d="M381.3 379.0L398.7 379.0L402.8 377.5L409.8 392.9L384.4 404.6L377.4 389.2L381.5 387.3Z"/>
<path d="M439.6 334.0L457.0 334.0L459.2 337.0L466.4 352.5L457.8 360.0L457.8 379.6L440.4 379.6L437.3 380.2L430.3 364.8L438.7 354.9L440.1 352.0Z"/>
<path d="M300.6 411.3L317.3 411.3L317.3 438.0L300.6 438.0Z"/>
<path d="M317.0 424.0L321.4 422.2L322.4 425.2L317.0 427.4Z"/>
<path d="M205.5 478.0L224.0 478.0L224.0 492.0L205.5 492.0Z"/>
<path d="M205.0 510.5L223.5 510.5L223.0 525.0L204.5 525.0Z"/>
<path d="M300.2 481.0L317.6 481.0L317.6 492.6L300.2 492.6Z"/>
<path d="M300.2 511.5L317.6 511.5L317.6 522.6L300.2 522.6Z"/>
<path d="M443.0 483.8L461.0 483.8L461.3 493.6L443.4 493.6Z"/>
<path d="M444.0 513.4L462.0 513.4L462.4 524.2L444.4 524.2Z"/>
</g>
<g fill="none" stroke="#cecece" stroke-width="17.4">
<path d="M319.9 379.4A30.4 30.4 0 0 1 301.1 379.4"/>
<path d="M324.8 323.7A30.4 30.4 0 0 1 336.8 335.3"/>
<path d="M281.9 360.9A30.4 30.4 0 0 1 281.3 342.1"/>
</g>
<path d="M496.5 279.4H504.6" stroke="#222" stroke-width="0.9"/>
<text x="312.6" y="587.8" font-size="14" fill="#222">6</text>
<path d="M318.7 437.3L444.4 438.6L446.3 485.8L318.7 485Z" fill="#edb120" stroke="#c8961a" stroke-width="0.8"/><path d="M318.7 485L444.4 438.6" stroke="#a07a18" stroke-width="0.6"/>
<path d="M223.9 492.3L299.7 492.3L299.7 515.3L221.6 514.6Z" fill="#8418d2" stroke="#6c12b0" stroke-width="0.6"/><path d="M221.6 514.6L299.7 496" stroke="#5f10a0" stroke-width="0.6" fill="none"/>
<path d="M222.3 521.6L299.7 521.6L298.1 584.8L218.9 584Z" fill="#a2142f" stroke="#8a1027" stroke-width="0.6"/><path d="M218.9 584L299.7 527M222.3 524L299.7 527" stroke="#7a0e22" stroke-width="0.6" fill="none"/>
<path d="M318.7 523.4L369 523.4L371 528.5L371.6 614L318.7 614Z" fill="#1072bd" stroke="#0d62a6" stroke-width="0.6"/><path d="M318.7 526L337 614M318.7 524.5L371 528.5" stroke="#0b4f88" stroke-width="0.6" fill="none"/>
<path d="M313.4 422.5V452.5" stroke="#1f77c8" stroke-width="1"/>
<rect x="311.1" y="452.4" width="4.7" height="12.3" rx="1" fill="#0f62a8"/>
<path d="M319 420L324 417.6" stroke="#e8b040" stroke-width="0.8"/><path d="M312 420.3l1.5 2 1.5-2" stroke="#e8a030" stroke-width="0.7" fill="none"/>
<path d="M309.2 424V417.8H318V424" stroke="#ff0000" stroke-width="1.9" fill="none"/>
<rect x="-3.2" y="-2.3" width="6.4" height="4.6" fill="#6a1fc0" transform="translate(327.3 416.2) rotate(-24)"/>
<rect x="330.9" y="412" width="5.6" height="5.4" fill="#6a1fc0" stroke="#000" stroke-width="1.1"/>
<text x="340.3" y="411.8" font-size="14" fill="#222">3</text>
<rect x="301.4" y="586.4" width="5.8" height="13.2" rx="1.2" fill="#35a6de"/>
<rect x="301.5" y="588.8" width="6" height="5.8" fill="#2aa0d8" stroke="#000" stroke-width="1.1"/>
<rect x="55.5" y="70.5" width="62" height="17" fill="#fff" stroke="#000" stroke-width="1"/>
<rect x="61.5" y="76.5" width="6" height="6" fill="#fff" stroke="#000" stroke-width="1"/>
<text x="72.3" y="82.8" font-size="12" fill="#2a2a2a">TrackID</text>
</svg><svg style="left:1px;top:641px" width="509" height="279" viewBox="1 641 509 279" font-family="Liberation Sans, sans-serif">
<rect x="0" y="639" width="512" height="282" fill="#f5f5f5"/>
<path d="M0 834L205.5 760L314 758.5L314 781L306 781L424 920L0 920Z" fill="#cdcdcd"/>
<path d="M122 754.4L160 751.2L186 750.8L186 753.4L207 758.6L205 760.4L160 759.4Z" fill="#c4c4c4"/>
<path d="M184 751.3L314 751.1L314 752.6L184 752.8Z" fill="#3c3c3c"/>
<path d="M186 753.2L314 753L314 757.6L207 758.4Z" fill="#fafafa"/>
<path d="M224 757H276" stroke="#6a6a6a" stroke-width="1.4"/>
<path d="M283 758.8L314 757.4L314 759.2L283 760Z" fill="#c8c8c8"/>
<path d="M2 756.6L122 754.2" stroke="#222" stroke-width="1.2"/>
<path d="M2 755.7L122 753.4" stroke="#f0c830" stroke-width="1" />
<path d="M160 751L314 750.6" stroke="#e6c040" stroke-opacity="0.7" stroke-width="0.8" stroke-dasharray="4 8"/>
<path d="M165 757.6L210 758.6M285 758.6L314 757.8" stroke="#f0cf50" stroke-width="1.2" stroke-dasharray="8 3"/>
<path d="M122 754.6L160 759.6L205 760.6" stroke="#333" stroke-width="1" fill="none"/>
<path d="M141.9 782.9H307.6" stroke="#b4b4b4" stroke-width="0.9"/>
<path d="M126.9 788.3H312.2" stroke="#b4b4b4" stroke-width="0.9"/>
<path d="M110.2 794.3H317.3" stroke="#b4b4b4" stroke-width="0.9"/>
<path d="M90.0 801.6H323.5" stroke="#b4b4b4" stroke-width="0.9"/>
<path d="M60.0 812.4H332.7" stroke="#b4b4b4" stroke-width="0.9"/>
<path d="M21.4 826.3H344.5" stroke="#b4b4b4" stroke-width="0.9"/>
<path d="M0.0 848.5H363.3" stroke="#b4b4b4" stroke-width="0.9"/>
<path d="M0.0 884.6H393.9" stroke="#b4b4b4" stroke-width="0.9"/>
<path d="M0 835.2L205.5 761.2" stroke="#fff" stroke-width="1.6"/>
<path d="M0 833.8L205.5 759.8" stroke="#111" stroke-width="1.3"/>
<path d="M306.5 788L310.4 792.3L326.2 807.1L342 825.7L335.5 825.7L320.6 807.1L308.6 792.3Z" fill="#fff"/>
<path d="M353 849L367.9 866.5L379 881.3L393.9 899.9L408.7 920L412.5 920L402.2 899.9L391.1 881.3L379 866.5L361.4 849Z" fill="#fff"/>
<path d="M303.9 781.1L424 920" stroke="#111" stroke-width="1.4"/>
<path d="M291 760.5L314 759.5L314 768.6L296 768.2Z" fill="#f4f4f4"/><path d="M304 779.6L313.4 779.6" stroke="#222" stroke-width="1"/>
<path d="M72.2 920L88.4 920L147.4 859L137.7 859ZM163.4 835L170.5 835L182.1 823L176.3 823ZM187.0 813L191.8 813L220.8 783L219.2 783ZM104.5 920L115.3 920L147.8 879L139.7 879ZM170.5 843L176.3 843L187.4 829L182.5 829ZM194.6 815L198.5 815L223.0 784L221.1 784Z" fill="#fbd84c"/>
<path d="M72.2 920L219.2 783M88.4 920L220.8 783M100 920L221.6 783.5M104.5 920L222 784M115.3 920L223.8 784" stroke="#fbd84c" stroke-width="0.8" fill="none"/>
<path d="M227.7 814H240V821.5Q240 823 238.5 823H229.2Q227.7 823 227.7 821.5ZM290.9 814H303.2V821.5Q303.2 823 301.7 823H292.4Q290.9 823 290.9 821.5Z" fill="#1072bd" stroke="#0d62a6" stroke-width="0.6"/>
<path d="M240 760.5H291.5Q293 760.5 293.6 762L307 791L307.4 813.5Q307.4 815 306 815H224.6Q223.2 815 223.2 813.5L223.6 791L237.4 762Q238 760.5 240 760.5Z" fill="#1072bd" stroke="#0d62a6" stroke-width="0.6"/>
<path d="M225.4 783.5L293.5 762.4M225 783L307 791.6M223.8 793L307.1 812.7M237 763H294M223.6 791.6H307" stroke="#0b5590" stroke-width="0.6" fill="none"/>
<path d="M315.2 640L511 640L511 920L464.6 920L313.4 780Z" fill="#edb120"/>
<path d="M315.7 640L313.9 780L464.9 919.6" stroke="#d39a14" stroke-width="1" fill="none"/>
<path d="M371 640L511 841" stroke="#a88420" stroke-width="0.7"/>
</svg></div></body></html>
